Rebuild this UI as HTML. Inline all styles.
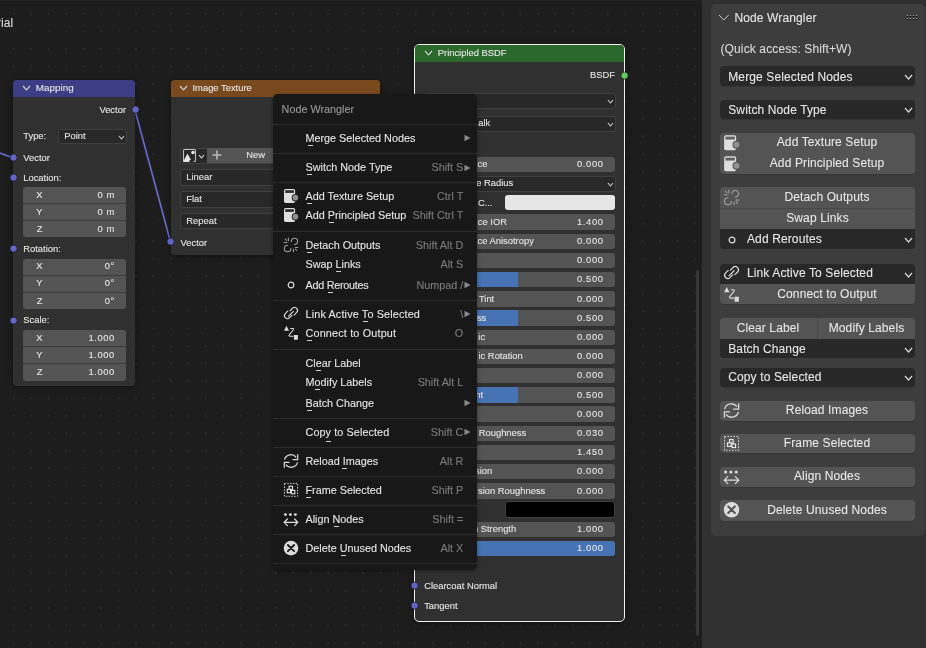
<!DOCTYPE html><html><head><meta charset="utf-8"><style>
html,body{margin:0;padding:0;width:926px;height:648px;overflow:hidden;background:#1d1d1d;}
#root{position:relative;width:926px;height:648px;overflow:hidden;will-change:transform;background:#1d1d1d;font-family:"Liberation Sans",sans-serif;}
#root div,#root svg{position:absolute;box-sizing:border-box;}
.t{white-space:nowrap;-webkit-text-stroke:0.1px currentColor;}
</style></head><body><div id="root">
<svg style="left:0;top:0" width="702" height="648">
<g fill="#292929"><rect x="12.75" y="13.00" width="2" height="2"/><rect x="12.75" y="30.47" width="2" height="2"/><rect x="12.75" y="47.94" width="2" height="2"/><rect x="12.75" y="65.41" width="2" height="2"/><rect x="12.75" y="82.88" width="2" height="2"/><rect x="12.75" y="100.35" width="2" height="2"/><rect x="12.75" y="117.82" width="2" height="2"/><rect x="12.75" y="135.29" width="2" height="2"/><rect x="12.75" y="152.76" width="2" height="2"/><rect x="12.75" y="170.23" width="2" height="2"/><rect x="12.75" y="187.70" width="2" height="2"/><rect x="12.75" y="205.17" width="2" height="2"/><rect x="12.75" y="222.64" width="2" height="2"/><rect x="12.75" y="240.11" width="2" height="2"/><rect x="12.75" y="257.58" width="2" height="2"/><rect x="12.75" y="275.05" width="2" height="2"/><rect x="12.75" y="292.52" width="2" height="2"/><rect x="12.75" y="309.99" width="2" height="2"/><rect x="12.75" y="327.46" width="2" height="2"/><rect x="12.75" y="344.93" width="2" height="2"/><rect x="12.75" y="362.40" width="2" height="2"/><rect x="12.75" y="379.87" width="2" height="2"/><rect x="12.75" y="397.34" width="2" height="2"/><rect x="12.75" y="414.81" width="2" height="2"/><rect x="12.75" y="432.28" width="2" height="2"/><rect x="12.75" y="449.75" width="2" height="2"/><rect x="12.75" y="467.22" width="2" height="2"/><rect x="12.75" y="484.69" width="2" height="2"/><rect x="12.75" y="502.16" width="2" height="2"/><rect x="12.75" y="519.63" width="2" height="2"/><rect x="12.75" y="537.10" width="2" height="2"/><rect x="12.75" y="554.57" width="2" height="2"/><rect x="12.75" y="572.04" width="2" height="2"/><rect x="12.75" y="589.51" width="2" height="2"/><rect x="12.75" y="606.98" width="2" height="2"/><rect x="12.75" y="624.45" width="2" height="2"/><rect x="12.75" y="641.92" width="2" height="2"/><rect x="30.22" y="13.00" width="2" height="2"/><rect x="30.22" y="30.47" width="2" height="2"/><rect x="30.22" y="47.94" width="2" height="2"/><rect x="30.22" y="65.41" width="2" height="2"/><rect x="30.22" y="82.88" width="2" height="2"/><rect x="30.22" y="100.35" width="2" height="2"/><rect x="30.22" y="117.82" width="2" height="2"/><rect x="30.22" y="135.29" width="2" height="2"/><rect x="30.22" y="152.76" width="2" height="2"/><rect x="30.22" y="170.23" width="2" height="2"/><rect x="30.22" y="187.70" width="2" height="2"/><rect x="30.22" y="205.17" width="2" height="2"/><rect x="30.22" y="222.64" width="2" height="2"/><rect x="30.22" y="240.11" width="2" height="2"/><rect x="30.22" y="257.58" width="2" height="2"/><rect x="30.22" y="275.05" width="2" height="2"/><rect x="30.22" y="292.52" width="2" height="2"/><rect x="30.22" y="309.99" width="2" height="2"/><rect x="30.22" y="327.46" width="2" height="2"/><rect x="30.22" y="344.93" width="2" height="2"/><rect x="30.22" y="362.40" width="2" height="2"/><rect x="30.22" y="379.87" width="2" height="2"/><rect x="30.22" y="397.34" width="2" height="2"/><rect x="30.22" y="414.81" width="2" height="2"/><rect x="30.22" y="432.28" width="2" height="2"/><rect x="30.22" y="449.75" width="2" height="2"/><rect x="30.22" y="467.22" width="2" height="2"/><rect x="30.22" y="484.69" width="2" height="2"/><rect x="30.22" y="502.16" width="2" height="2"/><rect x="30.22" y="519.63" width="2" height="2"/><rect x="30.22" y="537.10" width="2" height="2"/><rect x="30.22" y="554.57" width="2" height="2"/><rect x="30.22" y="572.04" width="2" height="2"/><rect x="30.22" y="589.51" width="2" height="2"/><rect x="30.22" y="606.98" width="2" height="2"/><rect x="30.22" y="624.45" width="2" height="2"/><rect x="30.22" y="641.92" width="2" height="2"/><rect x="47.69" y="13.00" width="2" height="2"/><rect x="47.69" y="30.47" width="2" height="2"/><rect x="47.69" y="47.94" width="2" height="2"/><rect x="47.69" y="65.41" width="2" height="2"/><rect x="47.69" y="82.88" width="2" height="2"/><rect x="47.69" y="100.35" width="2" height="2"/><rect x="47.69" y="117.82" width="2" height="2"/><rect x="47.69" y="135.29" width="2" height="2"/><rect x="47.69" y="152.76" width="2" height="2"/><rect x="47.69" y="170.23" width="2" height="2"/><rect x="47.69" y="187.70" width="2" height="2"/><rect x="47.69" y="205.17" width="2" height="2"/><rect x="47.69" y="222.64" width="2" height="2"/><rect x="47.69" y="240.11" width="2" height="2"/><rect x="47.69" y="257.58" width="2" height="2"/><rect x="47.69" y="275.05" width="2" height="2"/><rect x="47.69" y="292.52" width="2" height="2"/><rect x="47.69" y="309.99" width="2" height="2"/><rect x="47.69" y="327.46" width="2" height="2"/><rect x="47.69" y="344.93" width="2" height="2"/><rect x="47.69" y="362.40" width="2" height="2"/><rect x="47.69" y="379.87" width="2" height="2"/><rect x="47.69" y="397.34" width="2" height="2"/><rect x="47.69" y="414.81" width="2" height="2"/><rect x="47.69" y="432.28" width="2" height="2"/><rect x="47.69" y="449.75" width="2" height="2"/><rect x="47.69" y="467.22" width="2" height="2"/><rect x="47.69" y="484.69" width="2" height="2"/><rect x="47.69" y="502.16" width="2" height="2"/><rect x="47.69" y="519.63" width="2" height="2"/><rect x="47.69" y="537.10" width="2" height="2"/><rect x="47.69" y="554.57" width="2" height="2"/><rect x="47.69" y="572.04" width="2" height="2"/><rect x="47.69" y="589.51" width="2" height="2"/><rect x="47.69" y="606.98" width="2" height="2"/><rect x="47.69" y="624.45" width="2" height="2"/><rect x="47.69" y="641.92" width="2" height="2"/><rect x="65.16" y="13.00" width="2" height="2"/><rect x="65.16" y="30.47" width="2" height="2"/><rect x="65.16" y="47.94" width="2" height="2"/><rect x="65.16" y="65.41" width="2" height="2"/><rect x="65.16" y="82.88" width="2" height="2"/><rect x="65.16" y="100.35" width="2" height="2"/><rect x="65.16" y="117.82" width="2" height="2"/><rect x="65.16" y="135.29" width="2" height="2"/><rect x="65.16" y="152.76" width="2" height="2"/><rect x="65.16" y="170.23" width="2" height="2"/><rect x="65.16" y="187.70" width="2" height="2"/><rect x="65.16" y="205.17" width="2" height="2"/><rect x="65.16" y="222.64" width="2" height="2"/><rect x="65.16" y="240.11" width="2" height="2"/><rect x="65.16" y="257.58" width="2" height="2"/><rect x="65.16" y="275.05" width="2" height="2"/><rect x="65.16" y="292.52" width="2" height="2"/><rect x="65.16" y="309.99" width="2" height="2"/><rect x="65.16" y="327.46" width="2" height="2"/><rect x="65.16" y="344.93" width="2" height="2"/><rect x="65.16" y="362.40" width="2" height="2"/><rect x="65.16" y="379.87" width="2" height="2"/><rect x="65.16" y="397.34" width="2" height="2"/><rect x="65.16" y="414.81" width="2" height="2"/><rect x="65.16" y="432.28" width="2" height="2"/><rect x="65.16" y="449.75" width="2" height="2"/><rect x="65.16" y="467.22" width="2" height="2"/><rect x="65.16" y="484.69" width="2" height="2"/><rect x="65.16" y="502.16" width="2" height="2"/><rect x="65.16" y="519.63" width="2" height="2"/><rect x="65.16" y="537.10" width="2" height="2"/><rect x="65.16" y="554.57" width="2" height="2"/><rect x="65.16" y="572.04" width="2" height="2"/><rect x="65.16" y="589.51" width="2" height="2"/><rect x="65.16" y="606.98" width="2" height="2"/><rect x="65.16" y="624.45" width="2" height="2"/><rect x="65.16" y="641.92" width="2" height="2"/><rect x="82.63" y="13.00" width="2" height="2"/><rect x="82.63" y="30.47" width="2" height="2"/><rect x="82.63" y="47.94" width="2" height="2"/><rect x="82.63" y="65.41" width="2" height="2"/><rect x="82.63" y="82.88" width="2" height="2"/><rect x="82.63" y="100.35" width="2" height="2"/><rect x="82.63" y="117.82" width="2" height="2"/><rect x="82.63" y="135.29" width="2" height="2"/><rect x="82.63" y="152.76" width="2" height="2"/><rect x="82.63" y="170.23" width="2" height="2"/><rect x="82.63" y="187.70" width="2" height="2"/><rect x="82.63" y="205.17" width="2" height="2"/><rect x="82.63" y="222.64" width="2" height="2"/><rect x="82.63" y="240.11" width="2" height="2"/><rect x="82.63" y="257.58" width="2" height="2"/><rect x="82.63" y="275.05" width="2" height="2"/><rect x="82.63" y="292.52" width="2" height="2"/><rect x="82.63" y="309.99" width="2" height="2"/><rect x="82.63" y="327.46" width="2" height="2"/><rect x="82.63" y="344.93" width="2" height="2"/><rect x="82.63" y="362.40" width="2" height="2"/><rect x="82.63" y="379.87" width="2" height="2"/><rect x="82.63" y="397.34" width="2" height="2"/><rect x="82.63" y="414.81" width="2" height="2"/><rect x="82.63" y="432.28" width="2" height="2"/><rect x="82.63" y="449.75" width="2" height="2"/><rect x="82.63" y="467.22" width="2" height="2"/><rect x="82.63" y="484.69" width="2" height="2"/><rect x="82.63" y="502.16" width="2" height="2"/><rect x="82.63" y="519.63" width="2" height="2"/><rect x="82.63" y="537.10" width="2" height="2"/><rect x="82.63" y="554.57" width="2" height="2"/><rect x="82.63" y="572.04" width="2" height="2"/><rect x="82.63" y="589.51" width="2" height="2"/><rect x="82.63" y="606.98" width="2" height="2"/><rect x="82.63" y="624.45" width="2" height="2"/><rect x="82.63" y="641.92" width="2" height="2"/><rect x="100.10" y="13.00" width="2" height="2"/><rect x="100.10" y="30.47" width="2" height="2"/><rect x="100.10" y="47.94" width="2" height="2"/><rect x="100.10" y="65.41" width="2" height="2"/><rect x="100.10" y="82.88" width="2" height="2"/><rect x="100.10" y="100.35" width="2" height="2"/><rect x="100.10" y="117.82" width="2" height="2"/><rect x="100.10" y="135.29" width="2" height="2"/><rect x="100.10" y="152.76" width="2" height="2"/><rect x="100.10" y="170.23" width="2" height="2"/><rect x="100.10" y="187.70" width="2" height="2"/><rect x="100.10" y="205.17" width="2" height="2"/><rect x="100.10" y="222.64" width="2" height="2"/><rect x="100.10" y="240.11" width="2" height="2"/><rect x="100.10" y="257.58" width="2" height="2"/><rect x="100.10" y="275.05" width="2" height="2"/><rect x="100.10" y="292.52" width="2" height="2"/><rect x="100.10" y="309.99" width="2" height="2"/><rect x="100.10" y="327.46" width="2" height="2"/><rect x="100.10" y="344.93" width="2" height="2"/><rect x="100.10" y="362.40" width="2" height="2"/><rect x="100.10" y="379.87" width="2" height="2"/><rect x="100.10" y="397.34" width="2" height="2"/><rect x="100.10" y="414.81" width="2" height="2"/><rect x="100.10" y="432.28" width="2" height="2"/><rect x="100.10" y="449.75" width="2" height="2"/><rect x="100.10" y="467.22" width="2" height="2"/><rect x="100.10" y="484.69" width="2" height="2"/><rect x="100.10" y="502.16" width="2" height="2"/><rect x="100.10" y="519.63" width="2" height="2"/><rect x="100.10" y="537.10" width="2" height="2"/><rect x="100.10" y="554.57" width="2" height="2"/><rect x="100.10" y="572.04" width="2" height="2"/><rect x="100.10" y="589.51" width="2" height="2"/><rect x="100.10" y="606.98" width="2" height="2"/><rect x="100.10" y="624.45" width="2" height="2"/><rect x="100.10" y="641.92" width="2" height="2"/><rect x="117.57" y="13.00" width="2" height="2"/><rect x="117.57" y="30.47" width="2" height="2"/><rect x="117.57" y="47.94" width="2" height="2"/><rect x="117.57" y="65.41" width="2" height="2"/><rect x="117.57" y="82.88" width="2" height="2"/><rect x="117.57" y="100.35" width="2" height="2"/><rect x="117.57" y="117.82" width="2" height="2"/><rect x="117.57" y="135.29" width="2" height="2"/><rect x="117.57" y="152.76" width="2" height="2"/><rect x="117.57" y="170.23" width="2" height="2"/><rect x="117.57" y="187.70" width="2" height="2"/><rect x="117.57" y="205.17" width="2" height="2"/><rect x="117.57" y="222.64" width="2" height="2"/><rect x="117.57" y="240.11" width="2" height="2"/><rect x="117.57" y="257.58" width="2" height="2"/><rect x="117.57" y="275.05" width="2" height="2"/><rect x="117.57" y="292.52" width="2" height="2"/><rect x="117.57" y="309.99" width="2" height="2"/><rect x="117.57" y="327.46" width="2" height="2"/><rect x="117.57" y="344.93" width="2" height="2"/><rect x="117.57" y="362.40" width="2" height="2"/><rect x="117.57" y="379.87" width="2" height="2"/><rect x="117.57" y="397.34" width="2" height="2"/><rect x="117.57" y="414.81" width="2" height="2"/><rect x="117.57" y="432.28" width="2" height="2"/><rect x="117.57" y="449.75" width="2" height="2"/><rect x="117.57" y="467.22" width="2" height="2"/><rect x="117.57" y="484.69" width="2" height="2"/><rect x="117.57" y="502.16" width="2" height="2"/><rect x="117.57" y="519.63" width="2" height="2"/><rect x="117.57" y="537.10" width="2" height="2"/><rect x="117.57" y="554.57" width="2" height="2"/><rect x="117.57" y="572.04" width="2" height="2"/><rect x="117.57" y="589.51" width="2" height="2"/><rect x="117.57" y="606.98" width="2" height="2"/><rect x="117.57" y="624.45" width="2" height="2"/><rect x="117.57" y="641.92" width="2" height="2"/><rect x="135.04" y="13.00" width="2" height="2"/><rect x="135.04" y="30.47" width="2" height="2"/><rect x="135.04" y="47.94" width="2" height="2"/><rect x="135.04" y="65.41" width="2" height="2"/><rect x="135.04" y="82.88" width="2" height="2"/><rect x="135.04" y="100.35" width="2" height="2"/><rect x="135.04" y="117.82" width="2" height="2"/><rect x="135.04" y="135.29" width="2" height="2"/><rect x="135.04" y="152.76" width="2" height="2"/><rect x="135.04" y="170.23" width="2" height="2"/><rect x="135.04" y="187.70" width="2" height="2"/><rect x="135.04" y="205.17" width="2" height="2"/><rect x="135.04" y="222.64" width="2" height="2"/><rect x="135.04" y="240.11" width="2" height="2"/><rect x="135.04" y="257.58" width="2" height="2"/><rect x="135.04" y="275.05" width="2" height="2"/><rect x="135.04" y="292.52" width="2" height="2"/><rect x="135.04" y="309.99" width="2" height="2"/><rect x="135.04" y="327.46" width="2" height="2"/><rect x="135.04" y="344.93" width="2" height="2"/><rect x="135.04" y="362.40" width="2" height="2"/><rect x="135.04" y="379.87" width="2" height="2"/><rect x="135.04" y="397.34" width="2" height="2"/><rect x="135.04" y="414.81" width="2" height="2"/><rect x="135.04" y="432.28" width="2" height="2"/><rect x="135.04" y="449.75" width="2" height="2"/><rect x="135.04" y="467.22" width="2" height="2"/><rect x="135.04" y="484.69" width="2" height="2"/><rect x="135.04" y="502.16" width="2" height="2"/><rect x="135.04" y="519.63" width="2" height="2"/><rect x="135.04" y="537.10" width="2" height="2"/><rect x="135.04" y="554.57" width="2" height="2"/><rect x="135.04" y="572.04" width="2" height="2"/><rect x="135.04" y="589.51" width="2" height="2"/><rect x="135.04" y="606.98" width="2" height="2"/><rect x="135.04" y="624.45" width="2" height="2"/><rect x="135.04" y="641.92" width="2" height="2"/><rect x="152.51" y="13.00" width="2" height="2"/><rect x="152.51" y="30.47" width="2" height="2"/><rect x="152.51" y="47.94" width="2" height="2"/><rect x="152.51" y="65.41" width="2" height="2"/><rect x="152.51" y="82.88" width="2" height="2"/><rect x="152.51" y="100.35" width="2" height="2"/><rect x="152.51" y="117.82" width="2" height="2"/><rect x="152.51" y="135.29" width="2" height="2"/><rect x="152.51" y="152.76" width="2" height="2"/><rect x="152.51" y="170.23" width="2" height="2"/><rect x="152.51" y="187.70" width="2" height="2"/><rect x="152.51" y="205.17" width="2" height="2"/><rect x="152.51" y="222.64" width="2" height="2"/><rect x="152.51" y="240.11" width="2" height="2"/><rect x="152.51" y="257.58" width="2" height="2"/><rect x="152.51" y="275.05" width="2" height="2"/><rect x="152.51" y="292.52" width="2" height="2"/><rect x="152.51" y="309.99" width="2" height="2"/><rect x="152.51" y="327.46" width="2" height="2"/><rect x="152.51" y="344.93" width="2" height="2"/><rect x="152.51" y="362.40" width="2" height="2"/><rect x="152.51" y="379.87" width="2" height="2"/><rect x="152.51" y="397.34" width="2" height="2"/><rect x="152.51" y="414.81" width="2" height="2"/><rect x="152.51" y="432.28" width="2" height="2"/><rect x="152.51" y="449.75" width="2" height="2"/><rect x="152.51" y="467.22" width="2" height="2"/><rect x="152.51" y="484.69" width="2" height="2"/><rect x="152.51" y="502.16" width="2" height="2"/><rect x="152.51" y="519.63" width="2" height="2"/><rect x="152.51" y="537.10" width="2" height="2"/><rect x="152.51" y="554.57" width="2" height="2"/><rect x="152.51" y="572.04" width="2" height="2"/><rect x="152.51" y="589.51" width="2" height="2"/><rect x="152.51" y="606.98" width="2" height="2"/><rect x="152.51" y="624.45" width="2" height="2"/><rect x="152.51" y="641.92" width="2" height="2"/><rect x="169.98" y="13.00" width="2" height="2"/><rect x="169.98" y="30.47" width="2" height="2"/><rect x="169.98" y="47.94" width="2" height="2"/><rect x="169.98" y="65.41" width="2" height="2"/><rect x="169.98" y="82.88" width="2" height="2"/><rect x="169.98" y="100.35" width="2" height="2"/><rect x="169.98" y="117.82" width="2" height="2"/><rect x="169.98" y="135.29" width="2" height="2"/><rect x="169.98" y="152.76" width="2" height="2"/><rect x="169.98" y="170.23" width="2" height="2"/><rect x="169.98" y="187.70" width="2" height="2"/><rect x="169.98" y="205.17" width="2" height="2"/><rect x="169.98" y="222.64" width="2" height="2"/><rect x="169.98" y="240.11" width="2" height="2"/><rect x="169.98" y="257.58" width="2" height="2"/><rect x="169.98" y="275.05" width="2" height="2"/><rect x="169.98" y="292.52" width="2" height="2"/><rect x="169.98" y="309.99" width="2" height="2"/><rect x="169.98" y="327.46" width="2" height="2"/><rect x="169.98" y="344.93" width="2" height="2"/><rect x="169.98" y="362.40" width="2" height="2"/><rect x="169.98" y="379.87" width="2" height="2"/><rect x="169.98" y="397.34" width="2" height="2"/><rect x="169.98" y="414.81" width="2" height="2"/><rect x="169.98" y="432.28" width="2" height="2"/><rect x="169.98" y="449.75" width="2" height="2"/><rect x="169.98" y="467.22" width="2" height="2"/><rect x="169.98" y="484.69" width="2" height="2"/><rect x="169.98" y="502.16" width="2" height="2"/><rect x="169.98" y="519.63" width="2" height="2"/><rect x="169.98" y="537.10" width="2" height="2"/><rect x="169.98" y="554.57" width="2" height="2"/><rect x="169.98" y="572.04" width="2" height="2"/><rect x="169.98" y="589.51" width="2" height="2"/><rect x="169.98" y="606.98" width="2" height="2"/><rect x="169.98" y="624.45" width="2" height="2"/><rect x="169.98" y="641.92" width="2" height="2"/><rect x="187.45" y="13.00" width="2" height="2"/><rect x="187.45" y="30.47" width="2" height="2"/><rect x="187.45" y="47.94" width="2" height="2"/><rect x="187.45" y="65.41" width="2" height="2"/><rect x="187.45" y="82.88" width="2" height="2"/><rect x="187.45" y="100.35" width="2" height="2"/><rect x="187.45" y="117.82" width="2" height="2"/><rect x="187.45" y="135.29" width="2" height="2"/><rect x="187.45" y="152.76" width="2" height="2"/><rect x="187.45" y="170.23" width="2" height="2"/><rect x="187.45" y="187.70" width="2" height="2"/><rect x="187.45" y="205.17" width="2" height="2"/><rect x="187.45" y="222.64" width="2" height="2"/><rect x="187.45" y="240.11" width="2" height="2"/><rect x="187.45" y="257.58" width="2" height="2"/><rect x="187.45" y="275.05" width="2" height="2"/><rect x="187.45" y="292.52" width="2" height="2"/><rect x="187.45" y="309.99" width="2" height="2"/><rect x="187.45" y="327.46" width="2" height="2"/><rect x="187.45" y="344.93" width="2" height="2"/><rect x="187.45" y="362.40" width="2" height="2"/><rect x="187.45" y="379.87" width="2" height="2"/><rect x="187.45" y="397.34" width="2" height="2"/><rect x="187.45" y="414.81" width="2" height="2"/><rect x="187.45" y="432.28" width="2" height="2"/><rect x="187.45" y="449.75" width="2" height="2"/><rect x="187.45" y="467.22" width="2" height="2"/><rect x="187.45" y="484.69" width="2" height="2"/><rect x="187.45" y="502.16" width="2" height="2"/><rect x="187.45" y="519.63" width="2" height="2"/><rect x="187.45" y="537.10" width="2" height="2"/><rect x="187.45" y="554.57" width="2" height="2"/><rect x="187.45" y="572.04" width="2" height="2"/><rect x="187.45" y="589.51" width="2" height="2"/><rect x="187.45" y="606.98" width="2" height="2"/><rect x="187.45" y="624.45" width="2" height="2"/><rect x="187.45" y="641.92" width="2" height="2"/><rect x="204.92" y="13.00" width="2" height="2"/><rect x="204.92" y="30.47" width="2" height="2"/><rect x="204.92" y="47.94" width="2" height="2"/><rect x="204.92" y="65.41" width="2" height="2"/><rect x="204.92" y="82.88" width="2" height="2"/><rect x="204.92" y="100.35" width="2" height="2"/><rect x="204.92" y="117.82" width="2" height="2"/><rect x="204.92" y="135.29" width="2" height="2"/><rect x="204.92" y="152.76" width="2" height="2"/><rect x="204.92" y="170.23" width="2" height="2"/><rect x="204.92" y="187.70" width="2" height="2"/><rect x="204.92" y="205.17" width="2" height="2"/><rect x="204.92" y="222.64" width="2" height="2"/><rect x="204.92" y="240.11" width="2" height="2"/><rect x="204.92" y="257.58" width="2" height="2"/><rect x="204.92" y="275.05" width="2" height="2"/><rect x="204.92" y="292.52" width="2" height="2"/><rect x="204.92" y="309.99" width="2" height="2"/><rect x="204.92" y="327.46" width="2" height="2"/><rect x="204.92" y="344.93" width="2" height="2"/><rect x="204.92" y="362.40" width="2" height="2"/><rect x="204.92" y="379.87" width="2" height="2"/><rect x="204.92" y="397.34" width="2" height="2"/><rect x="204.92" y="414.81" width="2" height="2"/><rect x="204.92" y="432.28" width="2" height="2"/><rect x="204.92" y="449.75" width="2" height="2"/><rect x="204.92" y="467.22" width="2" height="2"/><rect x="204.92" y="484.69" width="2" height="2"/><rect x="204.92" y="502.16" width="2" height="2"/><rect x="204.92" y="519.63" width="2" height="2"/><rect x="204.92" y="537.10" width="2" height="2"/><rect x="204.92" y="554.57" width="2" height="2"/><rect x="204.92" y="572.04" width="2" height="2"/><rect x="204.92" y="589.51" width="2" height="2"/><rect x="204.92" y="606.98" width="2" height="2"/><rect x="204.92" y="624.45" width="2" height="2"/><rect x="204.92" y="641.92" width="2" height="2"/><rect x="222.39" y="13.00" width="2" height="2"/><rect x="222.39" y="30.47" width="2" height="2"/><rect x="222.39" y="47.94" width="2" height="2"/><rect x="222.39" y="65.41" width="2" height="2"/><rect x="222.39" y="82.88" width="2" height="2"/><rect x="222.39" y="100.35" width="2" height="2"/><rect x="222.39" y="117.82" width="2" height="2"/><rect x="222.39" y="135.29" width="2" height="2"/><rect x="222.39" y="152.76" width="2" height="2"/><rect x="222.39" y="170.23" width="2" height="2"/><rect x="222.39" y="187.70" width="2" height="2"/><rect x="222.39" y="205.17" width="2" height="2"/><rect x="222.39" y="222.64" width="2" height="2"/><rect x="222.39" y="240.11" width="2" height="2"/><rect x="222.39" y="257.58" width="2" height="2"/><rect x="222.39" y="275.05" width="2" height="2"/><rect x="222.39" y="292.52" width="2" height="2"/><rect x="222.39" y="309.99" width="2" height="2"/><rect x="222.39" y="327.46" width="2" height="2"/><rect x="222.39" y="344.93" width="2" height="2"/><rect x="222.39" y="362.40" width="2" height="2"/><rect x="222.39" y="379.87" width="2" height="2"/><rect x="222.39" y="397.34" width="2" height="2"/><rect x="222.39" y="414.81" width="2" height="2"/><rect x="222.39" y="432.28" width="2" height="2"/><rect x="222.39" y="449.75" width="2" height="2"/><rect x="222.39" y="467.22" width="2" height="2"/><rect x="222.39" y="484.69" width="2" height="2"/><rect x="222.39" y="502.16" width="2" height="2"/><rect x="222.39" y="519.63" width="2" height="2"/><rect x="222.39" y="537.10" width="2" height="2"/><rect x="222.39" y="554.57" width="2" height="2"/><rect x="222.39" y="572.04" width="2" height="2"/><rect x="222.39" y="589.51" width="2" height="2"/><rect x="222.39" y="606.98" width="2" height="2"/><rect x="222.39" y="624.45" width="2" height="2"/><rect x="222.39" y="641.92" width="2" height="2"/><rect x="239.86" y="13.00" width="2" height="2"/><rect x="239.86" y="30.47" width="2" height="2"/><rect x="239.86" y="47.94" width="2" height="2"/><rect x="239.86" y="65.41" width="2" height="2"/><rect x="239.86" y="82.88" width="2" height="2"/><rect x="239.86" y="100.35" width="2" height="2"/><rect x="239.86" y="117.82" width="2" height="2"/><rect x="239.86" y="135.29" width="2" height="2"/><rect x="239.86" y="152.76" width="2" height="2"/><rect x="239.86" y="170.23" width="2" height="2"/><rect x="239.86" y="187.70" width="2" height="2"/><rect x="239.86" y="205.17" width="2" height="2"/><rect x="239.86" y="222.64" width="2" height="2"/><rect x="239.86" y="240.11" width="2" height="2"/><rect x="239.86" y="257.58" width="2" height="2"/><rect x="239.86" y="275.05" width="2" height="2"/><rect x="239.86" y="292.52" width="2" height="2"/><rect x="239.86" y="309.99" width="2" height="2"/><rect x="239.86" y="327.46" width="2" height="2"/><rect x="239.86" y="344.93" width="2" height="2"/><rect x="239.86" y="362.40" width="2" height="2"/><rect x="239.86" y="379.87" width="2" height="2"/><rect x="239.86" y="397.34" width="2" height="2"/><rect x="239.86" y="414.81" width="2" height="2"/><rect x="239.86" y="432.28" width="2" height="2"/><rect x="239.86" y="449.75" width="2" height="2"/><rect x="239.86" y="467.22" width="2" height="2"/><rect x="239.86" y="484.69" width="2" height="2"/><rect x="239.86" y="502.16" width="2" height="2"/><rect x="239.86" y="519.63" width="2" height="2"/><rect x="239.86" y="537.10" width="2" height="2"/><rect x="239.86" y="554.57" width="2" height="2"/><rect x="239.86" y="572.04" width="2" height="2"/><rect x="239.86" y="589.51" width="2" height="2"/><rect x="239.86" y="606.98" width="2" height="2"/><rect x="239.86" y="624.45" width="2" height="2"/><rect x="239.86" y="641.92" width="2" height="2"/><rect x="257.33" y="13.00" width="2" height="2"/><rect x="257.33" y="30.47" width="2" height="2"/><rect x="257.33" y="47.94" width="2" height="2"/><rect x="257.33" y="65.41" width="2" height="2"/><rect x="257.33" y="82.88" width="2" height="2"/><rect x="257.33" y="100.35" width="2" height="2"/><rect x="257.33" y="117.82" width="2" height="2"/><rect x="257.33" y="135.29" width="2" height="2"/><rect x="257.33" y="152.76" width="2" height="2"/><rect x="257.33" y="170.23" width="2" height="2"/><rect x="257.33" y="187.70" width="2" height="2"/><rect x="257.33" y="205.17" width="2" height="2"/><rect x="257.33" y="222.64" width="2" height="2"/><rect x="257.33" y="240.11" width="2" height="2"/><rect x="257.33" y="257.58" width="2" height="2"/><rect x="257.33" y="275.05" width="2" height="2"/><rect x="257.33" y="292.52" width="2" height="2"/><rect x="257.33" y="309.99" width="2" height="2"/><rect x="257.33" y="327.46" width="2" height="2"/><rect x="257.33" y="344.93" width="2" height="2"/><rect x="257.33" y="362.40" width="2" height="2"/><rect x="257.33" y="379.87" width="2" height="2"/><rect x="257.33" y="397.34" width="2" height="2"/><rect x="257.33" y="414.81" width="2" height="2"/><rect x="257.33" y="432.28" width="2" height="2"/><rect x="257.33" y="449.75" width="2" height="2"/><rect x="257.33" y="467.22" width="2" height="2"/><rect x="257.33" y="484.69" width="2" height="2"/><rect x="257.33" y="502.16" width="2" height="2"/><rect x="257.33" y="519.63" width="2" height="2"/><rect x="257.33" y="537.10" width="2" height="2"/><rect x="257.33" y="554.57" width="2" height="2"/><rect x="257.33" y="572.04" width="2" height="2"/><rect x="257.33" y="589.51" width="2" height="2"/><rect x="257.33" y="606.98" width="2" height="2"/><rect x="257.33" y="624.45" width="2" height="2"/><rect x="257.33" y="641.92" width="2" height="2"/><rect x="274.80" y="13.00" width="2" height="2"/><rect x="274.80" y="30.47" width="2" height="2"/><rect x="274.80" y="47.94" width="2" height="2"/><rect x="274.80" y="65.41" width="2" height="2"/><rect x="274.80" y="82.88" width="2" height="2"/><rect x="274.80" y="100.35" width="2" height="2"/><rect x="274.80" y="117.82" width="2" height="2"/><rect x="274.80" y="135.29" width="2" height="2"/><rect x="274.80" y="152.76" width="2" height="2"/><rect x="274.80" y="170.23" width="2" height="2"/><rect x="274.80" y="187.70" width="2" height="2"/><rect x="274.80" y="205.17" width="2" height="2"/><rect x="274.80" y="222.64" width="2" height="2"/><rect x="274.80" y="240.11" width="2" height="2"/><rect x="274.80" y="257.58" width="2" height="2"/><rect x="274.80" y="275.05" width="2" height="2"/><rect x="274.80" y="292.52" width="2" height="2"/><rect x="274.80" y="309.99" width="2" height="2"/><rect x="274.80" y="327.46" width="2" height="2"/><rect x="274.80" y="344.93" width="2" height="2"/><rect x="274.80" y="362.40" width="2" height="2"/><rect x="274.80" y="379.87" width="2" height="2"/><rect x="274.80" y="397.34" width="2" height="2"/><rect x="274.80" y="414.81" width="2" height="2"/><rect x="274.80" y="432.28" width="2" height="2"/><rect x="274.80" y="449.75" width="2" height="2"/><rect x="274.80" y="467.22" width="2" height="2"/><rect x="274.80" y="484.69" width="2" height="2"/><rect x="274.80" y="502.16" width="2" height="2"/><rect x="274.80" y="519.63" width="2" height="2"/><rect x="274.80" y="537.10" width="2" height="2"/><rect x="274.80" y="554.57" width="2" height="2"/><rect x="274.80" y="572.04" width="2" height="2"/><rect x="274.80" y="589.51" width="2" height="2"/><rect x="274.80" y="606.98" width="2" height="2"/><rect x="274.80" y="624.45" width="2" height="2"/><rect x="274.80" y="641.92" width="2" height="2"/><rect x="292.27" y="13.00" width="2" height="2"/><rect x="292.27" y="30.47" width="2" height="2"/><rect x="292.27" y="47.94" width="2" height="2"/><rect x="292.27" y="65.41" width="2" height="2"/><rect x="292.27" y="82.88" width="2" height="2"/><rect x="292.27" y="100.35" width="2" height="2"/><rect x="292.27" y="117.82" width="2" height="2"/><rect x="292.27" y="135.29" width="2" height="2"/><rect x="292.27" y="152.76" width="2" height="2"/><rect x="292.27" y="170.23" width="2" height="2"/><rect x="292.27" y="187.70" width="2" height="2"/><rect x="292.27" y="205.17" width="2" height="2"/><rect x="292.27" y="222.64" width="2" height="2"/><rect x="292.27" y="240.11" width="2" height="2"/><rect x="292.27" y="257.58" width="2" height="2"/><rect x="292.27" y="275.05" width="2" height="2"/><rect x="292.27" y="292.52" width="2" height="2"/><rect x="292.27" y="309.99" width="2" height="2"/><rect x="292.27" y="327.46" width="2" height="2"/><rect x="292.27" y="344.93" width="2" height="2"/><rect x="292.27" y="362.40" width="2" height="2"/><rect x="292.27" y="379.87" width="2" height="2"/><rect x="292.27" y="397.34" width="2" height="2"/><rect x="292.27" y="414.81" width="2" height="2"/><rect x="292.27" y="432.28" width="2" height="2"/><rect x="292.27" y="449.75" width="2" height="2"/><rect x="292.27" y="467.22" width="2" height="2"/><rect x="292.27" y="484.69" width="2" height="2"/><rect x="292.27" y="502.16" width="2" height="2"/><rect x="292.27" y="519.63" width="2" height="2"/><rect x="292.27" y="537.10" width="2" height="2"/><rect x="292.27" y="554.57" width="2" height="2"/><rect x="292.27" y="572.04" width="2" height="2"/><rect x="292.27" y="589.51" width="2" height="2"/><rect x="292.27" y="606.98" width="2" height="2"/><rect x="292.27" y="624.45" width="2" height="2"/><rect x="292.27" y="641.92" width="2" height="2"/><rect x="309.74" y="13.00" width="2" height="2"/><rect x="309.74" y="30.47" width="2" height="2"/><rect x="309.74" y="47.94" width="2" height="2"/><rect x="309.74" y="65.41" width="2" height="2"/><rect x="309.74" y="82.88" width="2" height="2"/><rect x="309.74" y="100.35" width="2" height="2"/><rect x="309.74" y="117.82" width="2" height="2"/><rect x="309.74" y="135.29" width="2" height="2"/><rect x="309.74" y="152.76" width="2" height="2"/><rect x="309.74" y="170.23" width="2" height="2"/><rect x="309.74" y="187.70" width="2" height="2"/><rect x="309.74" y="205.17" width="2" height="2"/><rect x="309.74" y="222.64" width="2" height="2"/><rect x="309.74" y="240.11" width="2" height="2"/><rect x="309.74" y="257.58" width="2" height="2"/><rect x="309.74" y="275.05" width="2" height="2"/><rect x="309.74" y="292.52" width="2" height="2"/><rect x="309.74" y="309.99" width="2" height="2"/><rect x="309.74" y="327.46" width="2" height="2"/><rect x="309.74" y="344.93" width="2" height="2"/><rect x="309.74" y="362.40" width="2" height="2"/><rect x="309.74" y="379.87" width="2" height="2"/><rect x="309.74" y="397.34" width="2" height="2"/><rect x="309.74" y="414.81" width="2" height="2"/><rect x="309.74" y="432.28" width="2" height="2"/><rect x="309.74" y="449.75" width="2" height="2"/><rect x="309.74" y="467.22" width="2" height="2"/><rect x="309.74" y="484.69" width="2" height="2"/><rect x="309.74" y="502.16" width="2" height="2"/><rect x="309.74" y="519.63" width="2" height="2"/><rect x="309.74" y="537.10" width="2" height="2"/><rect x="309.74" y="554.57" width="2" height="2"/><rect x="309.74" y="572.04" width="2" height="2"/><rect x="309.74" y="589.51" width="2" height="2"/><rect x="309.74" y="606.98" width="2" height="2"/><rect x="309.74" y="624.45" width="2" height="2"/><rect x="309.74" y="641.92" width="2" height="2"/><rect x="327.21" y="13.00" width="2" height="2"/><rect x="327.21" y="30.47" width="2" height="2"/><rect x="327.21" y="47.94" width="2" height="2"/><rect x="327.21" y="65.41" width="2" height="2"/><rect x="327.21" y="82.88" width="2" height="2"/><rect x="327.21" y="100.35" width="2" height="2"/><rect x="327.21" y="117.82" width="2" height="2"/><rect x="327.21" y="135.29" width="2" height="2"/><rect x="327.21" y="152.76" width="2" height="2"/><rect x="327.21" y="170.23" width="2" height="2"/><rect x="327.21" y="187.70" width="2" height="2"/><rect x="327.21" y="205.17" width="2" height="2"/><rect x="327.21" y="222.64" width="2" height="2"/><rect x="327.21" y="240.11" width="2" height="2"/><rect x="327.21" y="257.58" width="2" height="2"/><rect x="327.21" y="275.05" width="2" height="2"/><rect x="327.21" y="292.52" width="2" height="2"/><rect x="327.21" y="309.99" width="2" height="2"/><rect x="327.21" y="327.46" width="2" height="2"/><rect x="327.21" y="344.93" width="2" height="2"/><rect x="327.21" y="362.40" width="2" height="2"/><rect x="327.21" y="379.87" width="2" height="2"/><rect x="327.21" y="397.34" width="2" height="2"/><rect x="327.21" y="414.81" width="2" height="2"/><rect x="327.21" y="432.28" width="2" height="2"/><rect x="327.21" y="449.75" width="2" height="2"/><rect x="327.21" y="467.22" width="2" height="2"/><rect x="327.21" y="484.69" width="2" height="2"/><rect x="327.21" y="502.16" width="2" height="2"/><rect x="327.21" y="519.63" width="2" height="2"/><rect x="327.21" y="537.10" width="2" height="2"/><rect x="327.21" y="554.57" width="2" height="2"/><rect x="327.21" y="572.04" width="2" height="2"/><rect x="327.21" y="589.51" width="2" height="2"/><rect x="327.21" y="606.98" width="2" height="2"/><rect x="327.21" y="624.45" width="2" height="2"/><rect x="327.21" y="641.92" width="2" height="2"/><rect x="344.68" y="13.00" width="2" height="2"/><rect x="344.68" y="30.47" width="2" height="2"/><rect x="344.68" y="47.94" width="2" height="2"/><rect x="344.68" y="65.41" width="2" height="2"/><rect x="344.68" y="82.88" width="2" height="2"/><rect x="344.68" y="100.35" width="2" height="2"/><rect x="344.68" y="117.82" width="2" height="2"/><rect x="344.68" y="135.29" width="2" height="2"/><rect x="344.68" y="152.76" width="2" height="2"/><rect x="344.68" y="170.23" width="2" height="2"/><rect x="344.68" y="187.70" width="2" height="2"/><rect x="344.68" y="205.17" width="2" height="2"/><rect x="344.68" y="222.64" width="2" height="2"/><rect x="344.68" y="240.11" width="2" height="2"/><rect x="344.68" y="257.58" width="2" height="2"/><rect x="344.68" y="275.05" width="2" height="2"/><rect x="344.68" y="292.52" width="2" height="2"/><rect x="344.68" y="309.99" width="2" height="2"/><rect x="344.68" y="327.46" width="2" height="2"/><rect x="344.68" y="344.93" width="2" height="2"/><rect x="344.68" y="362.40" width="2" height="2"/><rect x="344.68" y="379.87" width="2" height="2"/><rect x="344.68" y="397.34" width="2" height="2"/><rect x="344.68" y="414.81" width="2" height="2"/><rect x="344.68" y="432.28" width="2" height="2"/><rect x="344.68" y="449.75" width="2" height="2"/><rect x="344.68" y="467.22" width="2" height="2"/><rect x="344.68" y="484.69" width="2" height="2"/><rect x="344.68" y="502.16" width="2" height="2"/><rect x="344.68" y="519.63" width="2" height="2"/><rect x="344.68" y="537.10" width="2" height="2"/><rect x="344.68" y="554.57" width="2" height="2"/><rect x="344.68" y="572.04" width="2" height="2"/><rect x="344.68" y="589.51" width="2" height="2"/><rect x="344.68" y="606.98" width="2" height="2"/><rect x="344.68" y="624.45" width="2" height="2"/><rect x="344.68" y="641.92" width="2" height="2"/><rect x="362.15" y="13.00" width="2" height="2"/><rect x="362.15" y="30.47" width="2" height="2"/><rect x="362.15" y="47.94" width="2" height="2"/><rect x="362.15" y="65.41" width="2" height="2"/><rect x="362.15" y="82.88" width="2" height="2"/><rect x="362.15" y="100.35" width="2" height="2"/><rect x="362.15" y="117.82" width="2" height="2"/><rect x="362.15" y="135.29" width="2" height="2"/><rect x="362.15" y="152.76" width="2" height="2"/><rect x="362.15" y="170.23" width="2" height="2"/><rect x="362.15" y="187.70" width="2" height="2"/><rect x="362.15" y="205.17" width="2" height="2"/><rect x="362.15" y="222.64" width="2" height="2"/><rect x="362.15" y="240.11" width="2" height="2"/><rect x="362.15" y="257.58" width="2" height="2"/><rect x="362.15" y="275.05" width="2" height="2"/><rect x="362.15" y="292.52" width="2" height="2"/><rect x="362.15" y="309.99" width="2" height="2"/><rect x="362.15" y="327.46" width="2" height="2"/><rect x="362.15" y="344.93" width="2" height="2"/><rect x="362.15" y="362.40" width="2" height="2"/><rect x="362.15" y="379.87" width="2" height="2"/><rect x="362.15" y="397.34" width="2" height="2"/><rect x="362.15" y="414.81" width="2" height="2"/><rect x="362.15" y="432.28" width="2" height="2"/><rect x="362.15" y="449.75" width="2" height="2"/><rect x="362.15" y="467.22" width="2" height="2"/><rect x="362.15" y="484.69" width="2" height="2"/><rect x="362.15" y="502.16" width="2" height="2"/><rect x="362.15" y="519.63" width="2" height="2"/><rect x="362.15" y="537.10" width="2" height="2"/><rect x="362.15" y="554.57" width="2" height="2"/><rect x="362.15" y="572.04" width="2" height="2"/><rect x="362.15" y="589.51" width="2" height="2"/><rect x="362.15" y="606.98" width="2" height="2"/><rect x="362.15" y="624.45" width="2" height="2"/><rect x="362.15" y="641.92" width="2" height="2"/><rect x="379.62" y="13.00" width="2" height="2"/><rect x="379.62" y="30.47" width="2" height="2"/><rect x="379.62" y="47.94" width="2" height="2"/><rect x="379.62" y="65.41" width="2" height="2"/><rect x="379.62" y="82.88" width="2" height="2"/><rect x="379.62" y="100.35" width="2" height="2"/><rect x="379.62" y="117.82" width="2" height="2"/><rect x="379.62" y="135.29" width="2" height="2"/><rect x="379.62" y="152.76" width="2" height="2"/><rect x="379.62" y="170.23" width="2" height="2"/><rect x="379.62" y="187.70" width="2" height="2"/><rect x="379.62" y="205.17" width="2" height="2"/><rect x="379.62" y="222.64" width="2" height="2"/><rect x="379.62" y="240.11" width="2" height="2"/><rect x="379.62" y="257.58" width="2" height="2"/><rect x="379.62" y="275.05" width="2" height="2"/><rect x="379.62" y="292.52" width="2" height="2"/><rect x="379.62" y="309.99" width="2" height="2"/><rect x="379.62" y="327.46" width="2" height="2"/><rect x="379.62" y="344.93" width="2" height="2"/><rect x="379.62" y="362.40" width="2" height="2"/><rect x="379.62" y="379.87" width="2" height="2"/><rect x="379.62" y="397.34" width="2" height="2"/><rect x="379.62" y="414.81" width="2" height="2"/><rect x="379.62" y="432.28" width="2" height="2"/><rect x="379.62" y="449.75" width="2" height="2"/><rect x="379.62" y="467.22" width="2" height="2"/><rect x="379.62" y="484.69" width="2" height="2"/><rect x="379.62" y="502.16" width="2" height="2"/><rect x="379.62" y="519.63" width="2" height="2"/><rect x="379.62" y="537.10" width="2" height="2"/><rect x="379.62" y="554.57" width="2" height="2"/><rect x="379.62" y="572.04" width="2" height="2"/><rect x="379.62" y="589.51" width="2" height="2"/><rect x="379.62" y="606.98" width="2" height="2"/><rect x="379.62" y="624.45" width="2" height="2"/><rect x="379.62" y="641.92" width="2" height="2"/><rect x="397.09" y="13.00" width="2" height="2"/><rect x="397.09" y="30.47" width="2" height="2"/><rect x="397.09" y="47.94" width="2" height="2"/><rect x="397.09" y="65.41" width="2" height="2"/><rect x="397.09" y="82.88" width="2" height="2"/><rect x="397.09" y="100.35" width="2" height="2"/><rect x="397.09" y="117.82" width="2" height="2"/><rect x="397.09" y="135.29" width="2" height="2"/><rect x="397.09" y="152.76" width="2" height="2"/><rect x="397.09" y="170.23" width="2" height="2"/><rect x="397.09" y="187.70" width="2" height="2"/><rect x="397.09" y="205.17" width="2" height="2"/><rect x="397.09" y="222.64" width="2" height="2"/><rect x="397.09" y="240.11" width="2" height="2"/><rect x="397.09" y="257.58" width="2" height="2"/><rect x="397.09" y="275.05" width="2" height="2"/><rect x="397.09" y="292.52" width="2" height="2"/><rect x="397.09" y="309.99" width="2" height="2"/><rect x="397.09" y="327.46" width="2" height="2"/><rect x="397.09" y="344.93" width="2" height="2"/><rect x="397.09" y="362.40" width="2" height="2"/><rect x="397.09" y="379.87" width="2" height="2"/><rect x="397.09" y="397.34" width="2" height="2"/><rect x="397.09" y="414.81" width="2" height="2"/><rect x="397.09" y="432.28" width="2" height="2"/><rect x="397.09" y="449.75" width="2" height="2"/><rect x="397.09" y="467.22" width="2" height="2"/><rect x="397.09" y="484.69" width="2" height="2"/><rect x="397.09" y="502.16" width="2" height="2"/><rect x="397.09" y="519.63" width="2" height="2"/><rect x="397.09" y="537.10" width="2" height="2"/><rect x="397.09" y="554.57" width="2" height="2"/><rect x="397.09" y="572.04" width="2" height="2"/><rect x="397.09" y="589.51" width="2" height="2"/><rect x="397.09" y="606.98" width="2" height="2"/><rect x="397.09" y="624.45" width="2" height="2"/><rect x="397.09" y="641.92" width="2" height="2"/><rect x="414.56" y="13.00" width="2" height="2"/><rect x="414.56" y="30.47" width="2" height="2"/><rect x="414.56" y="47.94" width="2" height="2"/><rect x="414.56" y="65.41" width="2" height="2"/><rect x="414.56" y="82.88" width="2" height="2"/><rect x="414.56" y="100.35" width="2" height="2"/><rect x="414.56" y="117.82" width="2" height="2"/><rect x="414.56" y="135.29" width="2" height="2"/><rect x="414.56" y="152.76" width="2" height="2"/><rect x="414.56" y="170.23" width="2" height="2"/><rect x="414.56" y="187.70" width="2" height="2"/><rect x="414.56" y="205.17" width="2" height="2"/><rect x="414.56" y="222.64" width="2" height="2"/><rect x="414.56" y="240.11" width="2" height="2"/><rect x="414.56" y="257.58" width="2" height="2"/><rect x="414.56" y="275.05" width="2" height="2"/><rect x="414.56" y="292.52" width="2" height="2"/><rect x="414.56" y="309.99" width="2" height="2"/><rect x="414.56" y="327.46" width="2" height="2"/><rect x="414.56" y="344.93" width="2" height="2"/><rect x="414.56" y="362.40" width="2" height="2"/><rect x="414.56" y="379.87" width="2" height="2"/><rect x="414.56" y="397.34" width="2" height="2"/><rect x="414.56" y="414.81" width="2" height="2"/><rect x="414.56" y="432.28" width="2" height="2"/><rect x="414.56" y="449.75" width="2" height="2"/><rect x="414.56" y="467.22" width="2" height="2"/><rect x="414.56" y="484.69" width="2" height="2"/><rect x="414.56" y="502.16" width="2" height="2"/><rect x="414.56" y="519.63" width="2" height="2"/><rect x="414.56" y="537.10" width="2" height="2"/><rect x="414.56" y="554.57" width="2" height="2"/><rect x="414.56" y="572.04" width="2" height="2"/><rect x="414.56" y="589.51" width="2" height="2"/><rect x="414.56" y="606.98" width="2" height="2"/><rect x="414.56" y="624.45" width="2" height="2"/><rect x="414.56" y="641.92" width="2" height="2"/><rect x="432.03" y="13.00" width="2" height="2"/><rect x="432.03" y="30.47" width="2" height="2"/><rect x="432.03" y="47.94" width="2" height="2"/><rect x="432.03" y="65.41" width="2" height="2"/><rect x="432.03" y="82.88" width="2" height="2"/><rect x="432.03" y="100.35" width="2" height="2"/><rect x="432.03" y="117.82" width="2" height="2"/><rect x="432.03" y="135.29" width="2" height="2"/><rect x="432.03" y="152.76" width="2" height="2"/><rect x="432.03" y="170.23" width="2" height="2"/><rect x="432.03" y="187.70" width="2" height="2"/><rect x="432.03" y="205.17" width="2" height="2"/><rect x="432.03" y="222.64" width="2" height="2"/><rect x="432.03" y="240.11" width="2" height="2"/><rect x="432.03" y="257.58" width="2" height="2"/><rect x="432.03" y="275.05" width="2" height="2"/><rect x="432.03" y="292.52" width="2" height="2"/><rect x="432.03" y="309.99" width="2" height="2"/><rect x="432.03" y="327.46" width="2" height="2"/><rect x="432.03" y="344.93" width="2" height="2"/><rect x="432.03" y="362.40" width="2" height="2"/><rect x="432.03" y="379.87" width="2" height="2"/><rect x="432.03" y="397.34" width="2" height="2"/><rect x="432.03" y="414.81" width="2" height="2"/><rect x="432.03" y="432.28" width="2" height="2"/><rect x="432.03" y="449.75" width="2" height="2"/><rect x="432.03" y="467.22" width="2" height="2"/><rect x="432.03" y="484.69" width="2" height="2"/><rect x="432.03" y="502.16" width="2" height="2"/><rect x="432.03" y="519.63" width="2" height="2"/><rect x="432.03" y="537.10" width="2" height="2"/><rect x="432.03" y="554.57" width="2" height="2"/><rect x="432.03" y="572.04" width="2" height="2"/><rect x="432.03" y="589.51" width="2" height="2"/><rect x="432.03" y="606.98" width="2" height="2"/><rect x="432.03" y="624.45" width="2" height="2"/><rect x="432.03" y="641.92" width="2" height="2"/><rect x="449.50" y="13.00" width="2" height="2"/><rect x="449.50" y="30.47" width="2" height="2"/><rect x="449.50" y="47.94" width="2" height="2"/><rect x="449.50" y="65.41" width="2" height="2"/><rect x="449.50" y="82.88" width="2" height="2"/><rect x="449.50" y="100.35" width="2" height="2"/><rect x="449.50" y="117.82" width="2" height="2"/><rect x="449.50" y="135.29" width="2" height="2"/><rect x="449.50" y="152.76" width="2" height="2"/><rect x="449.50" y="170.23" width="2" height="2"/><rect x="449.50" y="187.70" width="2" height="2"/><rect x="449.50" y="205.17" width="2" height="2"/><rect x="449.50" y="222.64" width="2" height="2"/><rect x="449.50" y="240.11" width="2" height="2"/><rect x="449.50" y="257.58" width="2" height="2"/><rect x="449.50" y="275.05" width="2" height="2"/><rect x="449.50" y="292.52" width="2" height="2"/><rect x="449.50" y="309.99" width="2" height="2"/><rect x="449.50" y="327.46" width="2" height="2"/><rect x="449.50" y="344.93" width="2" height="2"/><rect x="449.50" y="362.40" width="2" height="2"/><rect x="449.50" y="379.87" width="2" height="2"/><rect x="449.50" y="397.34" width="2" height="2"/><rect x="449.50" y="414.81" width="2" height="2"/><rect x="449.50" y="432.28" width="2" height="2"/><rect x="449.50" y="449.75" width="2" height="2"/><rect x="449.50" y="467.22" width="2" height="2"/><rect x="449.50" y="484.69" width="2" height="2"/><rect x="449.50" y="502.16" width="2" height="2"/><rect x="449.50" y="519.63" width="2" height="2"/><rect x="449.50" y="537.10" width="2" height="2"/><rect x="449.50" y="554.57" width="2" height="2"/><rect x="449.50" y="572.04" width="2" height="2"/><rect x="449.50" y="589.51" width="2" height="2"/><rect x="449.50" y="606.98" width="2" height="2"/><rect x="449.50" y="624.45" width="2" height="2"/><rect x="449.50" y="641.92" width="2" height="2"/><rect x="466.97" y="13.00" width="2" height="2"/><rect x="466.97" y="30.47" width="2" height="2"/><rect x="466.97" y="47.94" width="2" height="2"/><rect x="466.97" y="65.41" width="2" height="2"/><rect x="466.97" y="82.88" width="2" height="2"/><rect x="466.97" y="100.35" width="2" height="2"/><rect x="466.97" y="117.82" width="2" height="2"/><rect x="466.97" y="135.29" width="2" height="2"/><rect x="466.97" y="152.76" width="2" height="2"/><rect x="466.97" y="170.23" width="2" height="2"/><rect x="466.97" y="187.70" width="2" height="2"/><rect x="466.97" y="205.17" width="2" height="2"/><rect x="466.97" y="222.64" width="2" height="2"/><rect x="466.97" y="240.11" width="2" height="2"/><rect x="466.97" y="257.58" width="2" height="2"/><rect x="466.97" y="275.05" width="2" height="2"/><rect x="466.97" y="292.52" width="2" height="2"/><rect x="466.97" y="309.99" width="2" height="2"/><rect x="466.97" y="327.46" width="2" height="2"/><rect x="466.97" y="344.93" width="2" height="2"/><rect x="466.97" y="362.40" width="2" height="2"/><rect x="466.97" y="379.87" width="2" height="2"/><rect x="466.97" y="397.34" width="2" height="2"/><rect x="466.97" y="414.81" width="2" height="2"/><rect x="466.97" y="432.28" width="2" height="2"/><rect x="466.97" y="449.75" width="2" height="2"/><rect x="466.97" y="467.22" width="2" height="2"/><rect x="466.97" y="484.69" width="2" height="2"/><rect x="466.97" y="502.16" width="2" height="2"/><rect x="466.97" y="519.63" width="2" height="2"/><rect x="466.97" y="537.10" width="2" height="2"/><rect x="466.97" y="554.57" width="2" height="2"/><rect x="466.97" y="572.04" width="2" height="2"/><rect x="466.97" y="589.51" width="2" height="2"/><rect x="466.97" y="606.98" width="2" height="2"/><rect x="466.97" y="624.45" width="2" height="2"/><rect x="466.97" y="641.92" width="2" height="2"/><rect x="484.44" y="13.00" width="2" height="2"/><rect x="484.44" y="30.47" width="2" height="2"/><rect x="484.44" y="47.94" width="2" height="2"/><rect x="484.44" y="65.41" width="2" height="2"/><rect x="484.44" y="82.88" width="2" height="2"/><rect x="484.44" y="100.35" width="2" height="2"/><rect x="484.44" y="117.82" width="2" height="2"/><rect x="484.44" y="135.29" width="2" height="2"/><rect x="484.44" y="152.76" width="2" height="2"/><rect x="484.44" y="170.23" width="2" height="2"/><rect x="484.44" y="187.70" width="2" height="2"/><rect x="484.44" y="205.17" width="2" height="2"/><rect x="484.44" y="222.64" width="2" height="2"/><rect x="484.44" y="240.11" width="2" height="2"/><rect x="484.44" y="257.58" width="2" height="2"/><rect x="484.44" y="275.05" width="2" height="2"/><rect x="484.44" y="292.52" width="2" height="2"/><rect x="484.44" y="309.99" width="2" height="2"/><rect x="484.44" y="327.46" width="2" height="2"/><rect x="484.44" y="344.93" width="2" height="2"/><rect x="484.44" y="362.40" width="2" height="2"/><rect x="484.44" y="379.87" width="2" height="2"/><rect x="484.44" y="397.34" width="2" height="2"/><rect x="484.44" y="414.81" width="2" height="2"/><rect x="484.44" y="432.28" width="2" height="2"/><rect x="484.44" y="449.75" width="2" height="2"/><rect x="484.44" y="467.22" width="2" height="2"/><rect x="484.44" y="484.69" width="2" height="2"/><rect x="484.44" y="502.16" width="2" height="2"/><rect x="484.44" y="519.63" width="2" height="2"/><rect x="484.44" y="537.10" width="2" height="2"/><rect x="484.44" y="554.57" width="2" height="2"/><rect x="484.44" y="572.04" width="2" height="2"/><rect x="484.44" y="589.51" width="2" height="2"/><rect x="484.44" y="606.98" width="2" height="2"/><rect x="484.44" y="624.45" width="2" height="2"/><rect x="484.44" y="641.92" width="2" height="2"/><rect x="501.91" y="13.00" width="2" height="2"/><rect x="501.91" y="30.47" width="2" height="2"/><rect x="501.91" y="47.94" width="2" height="2"/><rect x="501.91" y="65.41" width="2" height="2"/><rect x="501.91" y="82.88" width="2" height="2"/><rect x="501.91" y="100.35" width="2" height="2"/><rect x="501.91" y="117.82" width="2" height="2"/><rect x="501.91" y="135.29" width="2" height="2"/><rect x="501.91" y="152.76" width="2" height="2"/><rect x="501.91" y="170.23" width="2" height="2"/><rect x="501.91" y="187.70" width="2" height="2"/><rect x="501.91" y="205.17" width="2" height="2"/><rect x="501.91" y="222.64" width="2" height="2"/><rect x="501.91" y="240.11" width="2" height="2"/><rect x="501.91" y="257.58" width="2" height="2"/><rect x="501.91" y="275.05" width="2" height="2"/><rect x="501.91" y="292.52" width="2" height="2"/><rect x="501.91" y="309.99" width="2" height="2"/><rect x="501.91" y="327.46" width="2" height="2"/><rect x="501.91" y="344.93" width="2" height="2"/><rect x="501.91" y="362.40" width="2" height="2"/><rect x="501.91" y="379.87" width="2" height="2"/><rect x="501.91" y="397.34" width="2" height="2"/><rect x="501.91" y="414.81" width="2" height="2"/><rect x="501.91" y="432.28" width="2" height="2"/><rect x="501.91" y="449.75" width="2" height="2"/><rect x="501.91" y="467.22" width="2" height="2"/><rect x="501.91" y="484.69" width="2" height="2"/><rect x="501.91" y="502.16" width="2" height="2"/><rect x="501.91" y="519.63" width="2" height="2"/><rect x="501.91" y="537.10" width="2" height="2"/><rect x="501.91" y="554.57" width="2" height="2"/><rect x="501.91" y="572.04" width="2" height="2"/><rect x="501.91" y="589.51" width="2" height="2"/><rect x="501.91" y="606.98" width="2" height="2"/><rect x="501.91" y="624.45" width="2" height="2"/><rect x="501.91" y="641.92" width="2" height="2"/><rect x="519.38" y="13.00" width="2" height="2"/><rect x="519.38" y="30.47" width="2" height="2"/><rect x="519.38" y="47.94" width="2" height="2"/><rect x="519.38" y="65.41" width="2" height="2"/><rect x="519.38" y="82.88" width="2" height="2"/><rect x="519.38" y="100.35" width="2" height="2"/><rect x="519.38" y="117.82" width="2" height="2"/><rect x="519.38" y="135.29" width="2" height="2"/><rect x="519.38" y="152.76" width="2" height="2"/><rect x="519.38" y="170.23" width="2" height="2"/><rect x="519.38" y="187.70" width="2" height="2"/><rect x="519.38" y="205.17" width="2" height="2"/><rect x="519.38" y="222.64" width="2" height="2"/><rect x="519.38" y="240.11" width="2" height="2"/><rect x="519.38" y="257.58" width="2" height="2"/><rect x="519.38" y="275.05" width="2" height="2"/><rect x="519.38" y="292.52" width="2" height="2"/><rect x="519.38" y="309.99" width="2" height="2"/><rect x="519.38" y="327.46" width="2" height="2"/><rect x="519.38" y="344.93" width="2" height="2"/><rect x="519.38" y="362.40" width="2" height="2"/><rect x="519.38" y="379.87" width="2" height="2"/><rect x="519.38" y="397.34" width="2" height="2"/><rect x="519.38" y="414.81" width="2" height="2"/><rect x="519.38" y="432.28" width="2" height="2"/><rect x="519.38" y="449.75" width="2" height="2"/><rect x="519.38" y="467.22" width="2" height="2"/><rect x="519.38" y="484.69" width="2" height="2"/><rect x="519.38" y="502.16" width="2" height="2"/><rect x="519.38" y="519.63" width="2" height="2"/><rect x="519.38" y="537.10" width="2" height="2"/><rect x="519.38" y="554.57" width="2" height="2"/><rect x="519.38" y="572.04" width="2" height="2"/><rect x="519.38" y="589.51" width="2" height="2"/><rect x="519.38" y="606.98" width="2" height="2"/><rect x="519.38" y="624.45" width="2" height="2"/><rect x="519.38" y="641.92" width="2" height="2"/><rect x="536.85" y="13.00" width="2" height="2"/><rect x="536.85" y="30.47" width="2" height="2"/><rect x="536.85" y="47.94" width="2" height="2"/><rect x="536.85" y="65.41" width="2" height="2"/><rect x="536.85" y="82.88" width="2" height="2"/><rect x="536.85" y="100.35" width="2" height="2"/><rect x="536.85" y="117.82" width="2" height="2"/><rect x="536.85" y="135.29" width="2" height="2"/><rect x="536.85" y="152.76" width="2" height="2"/><rect x="536.85" y="170.23" width="2" height="2"/><rect x="536.85" y="187.70" width="2" height="2"/><rect x="536.85" y="205.17" width="2" height="2"/><rect x="536.85" y="222.64" width="2" height="2"/><rect x="536.85" y="240.11" width="2" height="2"/><rect x="536.85" y="257.58" width="2" height="2"/><rect x="536.85" y="275.05" width="2" height="2"/><rect x="536.85" y="292.52" width="2" height="2"/><rect x="536.85" y="309.99" width="2" height="2"/><rect x="536.85" y="327.46" width="2" height="2"/><rect x="536.85" y="344.93" width="2" height="2"/><rect x="536.85" y="362.40" width="2" height="2"/><rect x="536.85" y="379.87" width="2" height="2"/><rect x="536.85" y="397.34" width="2" height="2"/><rect x="536.85" y="414.81" width="2" height="2"/><rect x="536.85" y="432.28" width="2" height="2"/><rect x="536.85" y="449.75" width="2" height="2"/><rect x="536.85" y="467.22" width="2" height="2"/><rect x="536.85" y="484.69" width="2" height="2"/><rect x="536.85" y="502.16" width="2" height="2"/><rect x="536.85" y="519.63" width="2" height="2"/><rect x="536.85" y="537.10" width="2" height="2"/><rect x="536.85" y="554.57" width="2" height="2"/><rect x="536.85" y="572.04" width="2" height="2"/><rect x="536.85" y="589.51" width="2" height="2"/><rect x="536.85" y="606.98" width="2" height="2"/><rect x="536.85" y="624.45" width="2" height="2"/><rect x="536.85" y="641.92" width="2" height="2"/><rect x="554.32" y="13.00" width="2" height="2"/><rect x="554.32" y="30.47" width="2" height="2"/><rect x="554.32" y="47.94" width="2" height="2"/><rect x="554.32" y="65.41" width="2" height="2"/><rect x="554.32" y="82.88" width="2" height="2"/><rect x="554.32" y="100.35" width="2" height="2"/><rect x="554.32" y="117.82" width="2" height="2"/><rect x="554.32" y="135.29" width="2" height="2"/><rect x="554.32" y="152.76" width="2" height="2"/><rect x="554.32" y="170.23" width="2" height="2"/><rect x="554.32" y="187.70" width="2" height="2"/><rect x="554.32" y="205.17" width="2" height="2"/><rect x="554.32" y="222.64" width="2" height="2"/><rect x="554.32" y="240.11" width="2" height="2"/><rect x="554.32" y="257.58" width="2" height="2"/><rect x="554.32" y="275.05" width="2" height="2"/><rect x="554.32" y="292.52" width="2" height="2"/><rect x="554.32" y="309.99" width="2" height="2"/><rect x="554.32" y="327.46" width="2" height="2"/><rect x="554.32" y="344.93" width="2" height="2"/><rect x="554.32" y="362.40" width="2" height="2"/><rect x="554.32" y="379.87" width="2" height="2"/><rect x="554.32" y="397.34" width="2" height="2"/><rect x="554.32" y="414.81" width="2" height="2"/><rect x="554.32" y="432.28" width="2" height="2"/><rect x="554.32" y="449.75" width="2" height="2"/><rect x="554.32" y="467.22" width="2" height="2"/><rect x="554.32" y="484.69" width="2" height="2"/><rect x="554.32" y="502.16" width="2" height="2"/><rect x="554.32" y="519.63" width="2" height="2"/><rect x="554.32" y="537.10" width="2" height="2"/><rect x="554.32" y="554.57" width="2" height="2"/><rect x="554.32" y="572.04" width="2" height="2"/><rect x="554.32" y="589.51" width="2" height="2"/><rect x="554.32" y="606.98" width="2" height="2"/><rect x="554.32" y="624.45" width="2" height="2"/><rect x="554.32" y="641.92" width="2" height="2"/><rect x="571.79" y="13.00" width="2" height="2"/><rect x="571.79" y="30.47" width="2" height="2"/><rect x="571.79" y="47.94" width="2" height="2"/><rect x="571.79" y="65.41" width="2" height="2"/><rect x="571.79" y="82.88" width="2" height="2"/><rect x="571.79" y="100.35" width="2" height="2"/><rect x="571.79" y="117.82" width="2" height="2"/><rect x="571.79" y="135.29" width="2" height="2"/><rect x="571.79" y="152.76" width="2" height="2"/><rect x="571.79" y="170.23" width="2" height="2"/><rect x="571.79" y="187.70" width="2" height="2"/><rect x="571.79" y="205.17" width="2" height="2"/><rect x="571.79" y="222.64" width="2" height="2"/><rect x="571.79" y="240.11" width="2" height="2"/><rect x="571.79" y="257.58" width="2" height="2"/><rect x="571.79" y="275.05" width="2" height="2"/><rect x="571.79" y="292.52" width="2" height="2"/><rect x="571.79" y="309.99" width="2" height="2"/><rect x="571.79" y="327.46" width="2" height="2"/><rect x="571.79" y="344.93" width="2" height="2"/><rect x="571.79" y="362.40" width="2" height="2"/><rect x="571.79" y="379.87" width="2" height="2"/><rect x="571.79" y="397.34" width="2" height="2"/><rect x="571.79" y="414.81" width="2" height="2"/><rect x="571.79" y="432.28" width="2" height="2"/><rect x="571.79" y="449.75" width="2" height="2"/><rect x="571.79" y="467.22" width="2" height="2"/><rect x="571.79" y="484.69" width="2" height="2"/><rect x="571.79" y="502.16" width="2" height="2"/><rect x="571.79" y="519.63" width="2" height="2"/><rect x="571.79" y="537.10" width="2" height="2"/><rect x="571.79" y="554.57" width="2" height="2"/><rect x="571.79" y="572.04" width="2" height="2"/><rect x="571.79" y="589.51" width="2" height="2"/><rect x="571.79" y="606.98" width="2" height="2"/><rect x="571.79" y="624.45" width="2" height="2"/><rect x="571.79" y="641.92" width="2" height="2"/><rect x="589.26" y="13.00" width="2" height="2"/><rect x="589.26" y="30.47" width="2" height="2"/><rect x="589.26" y="47.94" width="2" height="2"/><rect x="589.26" y="65.41" width="2" height="2"/><rect x="589.26" y="82.88" width="2" height="2"/><rect x="589.26" y="100.35" width="2" height="2"/><rect x="589.26" y="117.82" width="2" height="2"/><rect x="589.26" y="135.29" width="2" height="2"/><rect x="589.26" y="152.76" width="2" height="2"/><rect x="589.26" y="170.23" width="2" height="2"/><rect x="589.26" y="187.70" width="2" height="2"/><rect x="589.26" y="205.17" width="2" height="2"/><rect x="589.26" y="222.64" width="2" height="2"/><rect x="589.26" y="240.11" width="2" height="2"/><rect x="589.26" y="257.58" width="2" height="2"/><rect x="589.26" y="275.05" width="2" height="2"/><rect x="589.26" y="292.52" width="2" height="2"/><rect x="589.26" y="309.99" width="2" height="2"/><rect x="589.26" y="327.46" width="2" height="2"/><rect x="589.26" y="344.93" width="2" height="2"/><rect x="589.26" y="362.40" width="2" height="2"/><rect x="589.26" y="379.87" width="2" height="2"/><rect x="589.26" y="397.34" width="2" height="2"/><rect x="589.26" y="414.81" width="2" height="2"/><rect x="589.26" y="432.28" width="2" height="2"/><rect x="589.26" y="449.75" width="2" height="2"/><rect x="589.26" y="467.22" width="2" height="2"/><rect x="589.26" y="484.69" width="2" height="2"/><rect x="589.26" y="502.16" width="2" height="2"/><rect x="589.26" y="519.63" width="2" height="2"/><rect x="589.26" y="537.10" width="2" height="2"/><rect x="589.26" y="554.57" width="2" height="2"/><rect x="589.26" y="572.04" width="2" height="2"/><rect x="589.26" y="589.51" width="2" height="2"/><rect x="589.26" y="606.98" width="2" height="2"/><rect x="589.26" y="624.45" width="2" height="2"/><rect x="589.26" y="641.92" width="2" height="2"/><rect x="606.73" y="13.00" width="2" height="2"/><rect x="606.73" y="30.47" width="2" height="2"/><rect x="606.73" y="47.94" width="2" height="2"/><rect x="606.73" y="65.41" width="2" height="2"/><rect x="606.73" y="82.88" width="2" height="2"/><rect x="606.73" y="100.35" width="2" height="2"/><rect x="606.73" y="117.82" width="2" height="2"/><rect x="606.73" y="135.29" width="2" height="2"/><rect x="606.73" y="152.76" width="2" height="2"/><rect x="606.73" y="170.23" width="2" height="2"/><rect x="606.73" y="187.70" width="2" height="2"/><rect x="606.73" y="205.17" width="2" height="2"/><rect x="606.73" y="222.64" width="2" height="2"/><rect x="606.73" y="240.11" width="2" height="2"/><rect x="606.73" y="257.58" width="2" height="2"/><rect x="606.73" y="275.05" width="2" height="2"/><rect x="606.73" y="292.52" width="2" height="2"/><rect x="606.73" y="309.99" width="2" height="2"/><rect x="606.73" y="327.46" width="2" height="2"/><rect x="606.73" y="344.93" width="2" height="2"/><rect x="606.73" y="362.40" width="2" height="2"/><rect x="606.73" y="379.87" width="2" height="2"/><rect x="606.73" y="397.34" width="2" height="2"/><rect x="606.73" y="414.81" width="2" height="2"/><rect x="606.73" y="432.28" width="2" height="2"/><rect x="606.73" y="449.75" width="2" height="2"/><rect x="606.73" y="467.22" width="2" height="2"/><rect x="606.73" y="484.69" width="2" height="2"/><rect x="606.73" y="502.16" width="2" height="2"/><rect x="606.73" y="519.63" width="2" height="2"/><rect x="606.73" y="537.10" width="2" height="2"/><rect x="606.73" y="554.57" width="2" height="2"/><rect x="606.73" y="572.04" width="2" height="2"/><rect x="606.73" y="589.51" width="2" height="2"/><rect x="606.73" y="606.98" width="2" height="2"/><rect x="606.73" y="624.45" width="2" height="2"/><rect x="606.73" y="641.92" width="2" height="2"/><rect x="624.20" y="13.00" width="2" height="2"/><rect x="624.20" y="30.47" width="2" height="2"/><rect x="624.20" y="47.94" width="2" height="2"/><rect x="624.20" y="65.41" width="2" height="2"/><rect x="624.20" y="82.88" width="2" height="2"/><rect x="624.20" y="100.35" width="2" height="2"/><rect x="624.20" y="117.82" width="2" height="2"/><rect x="624.20" y="135.29" width="2" height="2"/><rect x="624.20" y="152.76" width="2" height="2"/><rect x="624.20" y="170.23" width="2" height="2"/><rect x="624.20" y="187.70" width="2" height="2"/><rect x="624.20" y="205.17" width="2" height="2"/><rect x="624.20" y="222.64" width="2" height="2"/><rect x="624.20" y="240.11" width="2" height="2"/><rect x="624.20" y="257.58" width="2" height="2"/><rect x="624.20" y="275.05" width="2" height="2"/><rect x="624.20" y="292.52" width="2" height="2"/><rect x="624.20" y="309.99" width="2" height="2"/><rect x="624.20" y="327.46" width="2" height="2"/><rect x="624.20" y="344.93" width="2" height="2"/><rect x="624.20" y="362.40" width="2" height="2"/><rect x="624.20" y="379.87" width="2" height="2"/><rect x="624.20" y="397.34" width="2" height="2"/><rect x="624.20" y="414.81" width="2" height="2"/><rect x="624.20" y="432.28" width="2" height="2"/><rect x="624.20" y="449.75" width="2" height="2"/><rect x="624.20" y="467.22" width="2" height="2"/><rect x="624.20" y="484.69" width="2" height="2"/><rect x="624.20" y="502.16" width="2" height="2"/><rect x="624.20" y="519.63" width="2" height="2"/><rect x="624.20" y="537.10" width="2" height="2"/><rect x="624.20" y="554.57" width="2" height="2"/><rect x="624.20" y="572.04" width="2" height="2"/><rect x="624.20" y="589.51" width="2" height="2"/><rect x="624.20" y="606.98" width="2" height="2"/><rect x="624.20" y="624.45" width="2" height="2"/><rect x="624.20" y="641.92" width="2" height="2"/><rect x="641.67" y="13.00" width="2" height="2"/><rect x="641.67" y="30.47" width="2" height="2"/><rect x="641.67" y="47.94" width="2" height="2"/><rect x="641.67" y="65.41" width="2" height="2"/><rect x="641.67" y="82.88" width="2" height="2"/><rect x="641.67" y="100.35" width="2" height="2"/><rect x="641.67" y="117.82" width="2" height="2"/><rect x="641.67" y="135.29" width="2" height="2"/><rect x="641.67" y="152.76" width="2" height="2"/><rect x="641.67" y="170.23" width="2" height="2"/><rect x="641.67" y="187.70" width="2" height="2"/><rect x="641.67" y="205.17" width="2" height="2"/><rect x="641.67" y="222.64" width="2" height="2"/><rect x="641.67" y="240.11" width="2" height="2"/><rect x="641.67" y="257.58" width="2" height="2"/><rect x="641.67" y="275.05" width="2" height="2"/><rect x="641.67" y="292.52" width="2" height="2"/><rect x="641.67" y="309.99" width="2" height="2"/><rect x="641.67" y="327.46" width="2" height="2"/><rect x="641.67" y="344.93" width="2" height="2"/><rect x="641.67" y="362.40" width="2" height="2"/><rect x="641.67" y="379.87" width="2" height="2"/><rect x="641.67" y="397.34" width="2" height="2"/><rect x="641.67" y="414.81" width="2" height="2"/><rect x="641.67" y="432.28" width="2" height="2"/><rect x="641.67" y="449.75" width="2" height="2"/><rect x="641.67" y="467.22" width="2" height="2"/><rect x="641.67" y="484.69" width="2" height="2"/><rect x="641.67" y="502.16" width="2" height="2"/><rect x="641.67" y="519.63" width="2" height="2"/><rect x="641.67" y="537.10" width="2" height="2"/><rect x="641.67" y="554.57" width="2" height="2"/><rect x="641.67" y="572.04" width="2" height="2"/><rect x="641.67" y="589.51" width="2" height="2"/><rect x="641.67" y="606.98" width="2" height="2"/><rect x="641.67" y="624.45" width="2" height="2"/><rect x="641.67" y="641.92" width="2" height="2"/><rect x="659.14" y="13.00" width="2" height="2"/><rect x="659.14" y="30.47" width="2" height="2"/><rect x="659.14" y="47.94" width="2" height="2"/><rect x="659.14" y="65.41" width="2" height="2"/><rect x="659.14" y="82.88" width="2" height="2"/><rect x="659.14" y="100.35" width="2" height="2"/><rect x="659.14" y="117.82" width="2" height="2"/><rect x="659.14" y="135.29" width="2" height="2"/><rect x="659.14" y="152.76" width="2" height="2"/><rect x="659.14" y="170.23" width="2" height="2"/><rect x="659.14" y="187.70" width="2" height="2"/><rect x="659.14" y="205.17" width="2" height="2"/><rect x="659.14" y="222.64" width="2" height="2"/><rect x="659.14" y="240.11" width="2" height="2"/><rect x="659.14" y="257.58" width="2" height="2"/><rect x="659.14" y="275.05" width="2" height="2"/><rect x="659.14" y="292.52" width="2" height="2"/><rect x="659.14" y="309.99" width="2" height="2"/><rect x="659.14" y="327.46" width="2" height="2"/><rect x="659.14" y="344.93" width="2" height="2"/><rect x="659.14" y="362.40" width="2" height="2"/><rect x="659.14" y="379.87" width="2" height="2"/><rect x="659.14" y="397.34" width="2" height="2"/><rect x="659.14" y="414.81" width="2" height="2"/><rect x="659.14" y="432.28" width="2" height="2"/><rect x="659.14" y="449.75" width="2" height="2"/><rect x="659.14" y="467.22" width="2" height="2"/><rect x="659.14" y="484.69" width="2" height="2"/><rect x="659.14" y="502.16" width="2" height="2"/><rect x="659.14" y="519.63" width="2" height="2"/><rect x="659.14" y="537.10" width="2" height="2"/><rect x="659.14" y="554.57" width="2" height="2"/><rect x="659.14" y="572.04" width="2" height="2"/><rect x="659.14" y="589.51" width="2" height="2"/><rect x="659.14" y="606.98" width="2" height="2"/><rect x="659.14" y="624.45" width="2" height="2"/><rect x="659.14" y="641.92" width="2" height="2"/><rect x="676.61" y="13.00" width="2" height="2"/><rect x="676.61" y="30.47" width="2" height="2"/><rect x="676.61" y="47.94" width="2" height="2"/><rect x="676.61" y="65.41" width="2" height="2"/><rect x="676.61" y="82.88" width="2" height="2"/><rect x="676.61" y="100.35" width="2" height="2"/><rect x="676.61" y="117.82" width="2" height="2"/><rect x="676.61" y="135.29" width="2" height="2"/><rect x="676.61" y="152.76" width="2" height="2"/><rect x="676.61" y="170.23" width="2" height="2"/><rect x="676.61" y="187.70" width="2" height="2"/><rect x="676.61" y="205.17" width="2" height="2"/><rect x="676.61" y="222.64" width="2" height="2"/><rect x="676.61" y="240.11" width="2" height="2"/><rect x="676.61" y="257.58" width="2" height="2"/><rect x="676.61" y="275.05" width="2" height="2"/><rect x="676.61" y="292.52" width="2" height="2"/><rect x="676.61" y="309.99" width="2" height="2"/><rect x="676.61" y="327.46" width="2" height="2"/><rect x="676.61" y="344.93" width="2" height="2"/><rect x="676.61" y="362.40" width="2" height="2"/><rect x="676.61" y="379.87" width="2" height="2"/><rect x="676.61" y="397.34" width="2" height="2"/><rect x="676.61" y="414.81" width="2" height="2"/><rect x="676.61" y="432.28" width="2" height="2"/><rect x="676.61" y="449.75" width="2" height="2"/><rect x="676.61" y="467.22" width="2" height="2"/><rect x="676.61" y="484.69" width="2" height="2"/><rect x="676.61" y="502.16" width="2" height="2"/><rect x="676.61" y="519.63" width="2" height="2"/><rect x="676.61" y="537.10" width="2" height="2"/><rect x="676.61" y="554.57" width="2" height="2"/><rect x="676.61" y="572.04" width="2" height="2"/><rect x="676.61" y="589.51" width="2" height="2"/><rect x="676.61" y="606.98" width="2" height="2"/><rect x="676.61" y="624.45" width="2" height="2"/><rect x="676.61" y="641.92" width="2" height="2"/><rect x="694.08" y="13.00" width="2" height="2"/><rect x="694.08" y="30.47" width="2" height="2"/><rect x="694.08" y="47.94" width="2" height="2"/><rect x="694.08" y="65.41" width="2" height="2"/><rect x="694.08" y="82.88" width="2" height="2"/><rect x="694.08" y="100.35" width="2" height="2"/><rect x="694.08" y="117.82" width="2" height="2"/><rect x="694.08" y="135.29" width="2" height="2"/><rect x="694.08" y="152.76" width="2" height="2"/><rect x="694.08" y="170.23" width="2" height="2"/><rect x="694.08" y="187.70" width="2" height="2"/><rect x="694.08" y="205.17" width="2" height="2"/><rect x="694.08" y="222.64" width="2" height="2"/><rect x="694.08" y="240.11" width="2" height="2"/><rect x="694.08" y="257.58" width="2" height="2"/><rect x="694.08" y="275.05" width="2" height="2"/><rect x="694.08" y="292.52" width="2" height="2"/><rect x="694.08" y="309.99" width="2" height="2"/><rect x="694.08" y="327.46" width="2" height="2"/><rect x="694.08" y="344.93" width="2" height="2"/><rect x="694.08" y="362.40" width="2" height="2"/><rect x="694.08" y="379.87" width="2" height="2"/><rect x="694.08" y="397.34" width="2" height="2"/><rect x="694.08" y="414.81" width="2" height="2"/><rect x="694.08" y="432.28" width="2" height="2"/><rect x="694.08" y="449.75" width="2" height="2"/><rect x="694.08" y="467.22" width="2" height="2"/><rect x="694.08" y="484.69" width="2" height="2"/><rect x="694.08" y="502.16" width="2" height="2"/><rect x="694.08" y="519.63" width="2" height="2"/><rect x="694.08" y="537.10" width="2" height="2"/><rect x="694.08" y="554.57" width="2" height="2"/><rect x="694.08" y="572.04" width="2" height="2"/><rect x="694.08" y="589.51" width="2" height="2"/><rect x="694.08" y="606.98" width="2" height="2"/><rect x="694.08" y="624.45" width="2" height="2"/><rect x="694.08" y="641.92" width="2" height="2"/></g></svg>
<div style="left:0px;top:0px;width:702px;height:1px;background:#232323;border-radius:0px;"></div>
<div class="t" style="left:-186.60px;top:17.04px;width:200px;text-align:right;font-size:12px;line-height:12px;color:#dcdcdc;letter-spacing:0.12px;">Material</div>
<svg style="left:0px;top:0px;" width="702" height="648" viewBox="0 0 702 648"><g stroke="#6b6bd0" stroke-width="1.6" fill="none"><path d="M-20 146 L13.5 158"/><path d="M135 110 L170.5 242"/></g></svg>
<div style="left:13.3px;top:80px;width:121.7px;height:306px;background:#303030;border-radius:4px;box-shadow:0 1px 6px rgba(0,0,0,0.45);"></div>
<div style="left:13.3px;top:80px;width:121.7px;height:17.4px;background:#3d3d85;border-radius:0px;border-radius:4px 4px 0 0;"></div>
<svg style="left:22.25px;top:85.1px;" width="9" height="5.8" viewBox="0 0 9 5.8"><path d="M1 1 L4.5 4.8 L8 1" stroke="#cfcfcf" stroke-width="1.2" fill="none"/></svg>
<div class="t" style="left:35.75px;top:82.62px;font-size:9.9px;line-height:9.9px;color:#e6e6e6;">Mapping</div>
<div class="t" style="left:26.00px;top:104.54px;width:100px;text-align:right;font-size:9.4px;line-height:9.4px;color:#e6e6e6;">Vector</div>
<svg style="left:130.65px;top:105.4px;" width="9.2" height="9.2" viewBox="0 0 9.2 9.2"><circle cx="4.6" cy="4.6" r="3.6" fill="#6363c7" stroke="#111" stroke-opacity="0.7" stroke-width="0.9"/></svg>
<div class="t" style="left:23.25px;top:131.29px;font-size:9.4px;line-height:9.4px;color:#e6e6e6;">Type:</div>
<div style="left:57.5px;top:128.75px;width:69px;height:15.5px;background:#282828;border-radius:3px;border:1px solid #404040;"></div>
<div class="t" style="left:64.25px;top:131.29px;font-size:9.4px;line-height:9.4px;color:#e6e6e6;">Point</div>
<svg style="left:117.5px;top:135.0px;" width="7" height="5" viewBox="0 0 7 5"><path d="M1 1 L3.5 4 L6 1" stroke="#d0d0d0" stroke-width="1.1" fill="none"/></svg>
<svg style="left:8.65px;top:153.4px;" width="9.2" height="9.2" viewBox="0 0 9.2 9.2"><circle cx="4.6" cy="4.6" r="3.6" fill="#6363c7" stroke="#111" stroke-opacity="0.7" stroke-width="0.9"/></svg>
<div class="t" style="left:23.25px;top:153.04px;font-size:9.4px;line-height:9.4px;color:#e6e6e6;">Vector</div>
<svg style="left:8.65px;top:172.65px;" width="9.2" height="9.2" viewBox="0 0 9.2 9.2"><circle cx="4.6" cy="4.6" r="3.6" fill="#6363c7" stroke="#111" stroke-opacity="0.7" stroke-width="0.9"/></svg>
<div class="t" style="left:23.25px;top:172.54px;font-size:9.4px;line-height:9.4px;color:#e6e6e6;">Location:</div>
<div style="left:23px;top:186.75px;width:103.25px;height:50px;background:#545454;border-radius:3px;"></div>
<div style="left:23px;top:202.91666666666666px;width:103.25px;height:1px;background:#3a3a3a;border-radius:0px;"></div>
<div style="left:23px;top:219.58333333333334px;width:103.25px;height:1px;background:#3a3a3a;border-radius:0px;"></div>
<div class="t" style="left:29.50px;top:190.04px;width:20px;text-align:center;font-size:9.4px;line-height:9.4px;color:#e6e6e6;">X</div>
<div class="t" style="left:34.85px;top:190.04px;width:80px;text-align:right;font-size:9.4px;line-height:9.4px;color:#e6e6e6;letter-spacing:0.6px;">0 m</div>
<div class="t" style="left:29.50px;top:207.04px;width:20px;text-align:center;font-size:9.4px;line-height:9.4px;color:#e6e6e6;">Y</div>
<div class="t" style="left:34.85px;top:207.04px;width:80px;text-align:right;font-size:9.4px;line-height:9.4px;color:#e6e6e6;letter-spacing:0.6px;">0 m</div>
<div class="t" style="left:29.50px;top:223.79px;width:20px;text-align:center;font-size:9.4px;line-height:9.4px;color:#e6e6e6;">Z</div>
<div class="t" style="left:34.85px;top:223.79px;width:80px;text-align:right;font-size:9.4px;line-height:9.4px;color:#e6e6e6;letter-spacing:0.6px;">0 m</div>
<svg style="left:8.65px;top:244.4px;" width="9.2" height="9.2" viewBox="0 0 9.2 9.2"><circle cx="4.6" cy="4.6" r="3.6" fill="#6363c7" stroke="#111" stroke-opacity="0.7" stroke-width="0.9"/></svg>
<div class="t" style="left:23.25px;top:244.04px;font-size:9.4px;line-height:9.4px;color:#e6e6e6;">Rotation:</div>
<div style="left:23px;top:258.5px;width:103.25px;height:50.5px;background:#545454;border-radius:3px;"></div>
<div style="left:23px;top:274.8333333333333px;width:103.25px;height:1px;background:#3a3a3a;border-radius:0px;"></div>
<div style="left:23px;top:291.6666666666667px;width:103.25px;height:1px;background:#3a3a3a;border-radius:0px;"></div>
<div class="t" style="left:29.50px;top:261.04px;width:20px;text-align:center;font-size:9.4px;line-height:9.4px;color:#e6e6e6;">X</div>
<div class="t" style="left:34.85px;top:261.04px;width:80px;text-align:right;font-size:9.4px;line-height:9.4px;color:#e6e6e6;letter-spacing:0.6px;">0°</div>
<div class="t" style="left:29.50px;top:278.04px;width:20px;text-align:center;font-size:9.4px;line-height:9.4px;color:#e6e6e6;">Y</div>
<div class="t" style="left:34.85px;top:278.04px;width:80px;text-align:right;font-size:9.4px;line-height:9.4px;color:#e6e6e6;letter-spacing:0.6px;">0°</div>
<div class="t" style="left:29.50px;top:296.04px;width:20px;text-align:center;font-size:9.4px;line-height:9.4px;color:#e6e6e6;">Z</div>
<div class="t" style="left:34.85px;top:296.04px;width:80px;text-align:right;font-size:9.4px;line-height:9.4px;color:#e6e6e6;letter-spacing:0.6px;">0°</div>
<svg style="left:8.65px;top:315.65px;" width="9.2" height="9.2" viewBox="0 0 9.2 9.2"><circle cx="4.6" cy="4.6" r="3.6" fill="#6363c7" stroke="#111" stroke-opacity="0.7" stroke-width="0.9"/></svg>
<div class="t" style="left:23.25px;top:315.29px;font-size:9.4px;line-height:9.4px;color:#e6e6e6;">Scale:</div>
<div style="left:23px;top:329.75px;width:103.25px;height:51.25px;background:#545454;border-radius:3px;"></div>
<div style="left:23px;top:346.3333333333333px;width:103.25px;height:1px;background:#3a3a3a;border-radius:0px;"></div>
<div style="left:23px;top:363.4166666666667px;width:103.25px;height:1px;background:#3a3a3a;border-radius:0px;"></div>
<div class="t" style="left:29.50px;top:333.04px;width:20px;text-align:center;font-size:9.4px;line-height:9.4px;color:#e6e6e6;">X</div>
<div class="t" style="left:34.85px;top:333.04px;width:80px;text-align:right;font-size:9.4px;line-height:9.4px;color:#e6e6e6;letter-spacing:0.6px;">1.000</div>
<div class="t" style="left:29.50px;top:350.29px;width:20px;text-align:center;font-size:9.4px;line-height:9.4px;color:#e6e6e6;">Y</div>
<div class="t" style="left:34.85px;top:350.29px;width:80px;text-align:right;font-size:9.4px;line-height:9.4px;color:#e6e6e6;letter-spacing:0.6px;">1.000</div>
<div class="t" style="left:29.50px;top:367.29px;width:20px;text-align:center;font-size:9.4px;line-height:9.4px;color:#e6e6e6;">Z</div>
<div class="t" style="left:34.85px;top:367.29px;width:80px;text-align:right;font-size:9.4px;line-height:9.4px;color:#e6e6e6;letter-spacing:0.6px;">1.000</div>
<div style="left:171px;top:80px;width:209px;height:175px;background:#303030;border-radius:4px;box-shadow:0 1px 6px rgba(0,0,0,0.45);"></div>
<div style="left:171px;top:80px;width:209px;height:17.4px;background:#7a4a1f;border-radius:0px;border-radius:4px 4px 0 0;"></div>
<svg style="left:179.0px;top:85.1px;" width="9" height="5.8" viewBox="0 0 9 5.8"><path d="M1 1 L4.5 4.8 L8 1" stroke="#cfcfcf" stroke-width="1.2" fill="none"/></svg>
<div class="t" style="left:192.50px;top:83.04px;font-size:9.4px;line-height:9.4px;color:#e6e6e6;">Image Texture</div>
<div style="left:179.8px;top:147.5px;width:110px;height:16px;background:#282828;border-radius:3px;border:1px solid #404040;"></div>
<div style="left:206.5px;top:148px;width:80px;height:15px;background:#545454;border-radius:0px;"></div>
<svg style="left:182px;top:148px;" width="16" height="15" viewBox="0 0 16 15"><rect x="1.5" y="1.5" width="12" height="12" rx="1" fill="none" stroke="#bdbdbd" stroke-width="1.1"/><path d="M1 14 L5.5 5.5 L10 14 Z" fill="#e6e6e6"/><circle cx="11" cy="4.5" r="1.8" fill="#e6e6e6"/><rect x="7.5" y="12" width="4" height="3" fill="#282828"/></svg>
<svg style="left:197.8px;top:153.5px;" width="7" height="5" viewBox="0 0 7 5"><path d="M1 1 L3.5 4 L6 1" stroke="#e0e0e0" stroke-width="1.1" fill="none"/></svg>
<svg style="left:211px;top:149px;" width="12" height="12" viewBox="0 0 12 12"><path d="M6 1.5 V10.5 M1.5 6 H10.5" stroke="#b8b8b8" stroke-width="1.6"/></svg>
<div class="t" style="left:246.25px;top:149.54px;font-size:9.4px;line-height:9.4px;color:#e6e6e6;">New</div>
<div style="left:179.8px;top:169.25px;width:110px;height:16.5px;background:#282828;border-radius:3px;border:1px solid #404040;"></div>
<div class="t" style="left:186.25px;top:171.79px;font-size:9.4px;line-height:9.4px;color:#e6e6e6;">Linear</div>
<div style="left:179.8px;top:191px;width:110px;height:16.5px;background:#282828;border-radius:3px;border:1px solid #404040;"></div>
<div class="t" style="left:186.25px;top:194.29px;font-size:9.4px;line-height:9.4px;color:#e6e6e6;">Flat</div>
<div style="left:179.8px;top:212.5px;width:110px;height:16.5px;background:#282828;border-radius:3px;border:1px solid #404040;"></div>
<div class="t" style="left:186.25px;top:216.29px;font-size:9.4px;line-height:9.4px;color:#e6e6e6;">Repeat</div>
<svg style="left:165.9px;top:237.4px;" width="9.2" height="9.2" viewBox="0 0 9.2 9.2"><circle cx="4.6" cy="4.6" r="3.6" fill="#6363c7" stroke="#111" stroke-opacity="0.7" stroke-width="0.9"/></svg>
<div class="t" style="left:180.50px;top:238.04px;font-size:9.4px;line-height:9.4px;color:#e6e6e6;">Vector</div>
<div style="left:414px;top:44px;width:211px;height:577.5px;background:#303030;border-radius:5px;box-shadow:0 1px 6px rgba(0,0,0,0.45);border:1.2px solid #f0f0f0;"></div>
<div style="left:415.2px;top:45.2px;width:208.6px;height:17px;background:#2b682b;border-radius:0px;border-radius:4px 4px 0 0;"></div>
<svg style="left:424.2px;top:50.1px;" width="9" height="5.8" viewBox="0 0 9 5.8"><path d="M1 1 L4.5 4.8 L8 1" stroke="#cfcfcf" stroke-width="1.2" fill="none"/></svg>
<div class="t" style="left:437.75px;top:47.64px;font-size:9.4px;line-height:9.4px;color:#e6e6e6;">Principled BSDF</div>
<div class="t" style="left:535.00px;top:70.29px;width:80px;text-align:right;font-size:9.4px;line-height:9.4px;color:#e6e6e6;">BSDF</div>
<svg style="left:619.65px;top:70.65px;" width="9.2" height="9.2" viewBox="0 0 9.2 9.2"><circle cx="4.6" cy="4.6" r="3.6" fill="#63c763" stroke="#111" stroke-opacity="0.7" stroke-width="0.9"/></svg>
<div style="left:423px;top:93.25px;width:192.5px;height:16px;background:#282828;border-radius:3px;border:1px solid #404040;"></div>
<svg style="left:606.5px;top:99.25px;" width="7" height="5" viewBox="0 0 7 5"><path d="M1 1 L3.5 4 L6 1" stroke="#d0d0d0" stroke-width="1.1" fill="none"/></svg>
<div style="left:423px;top:115.5px;width:192.5px;height:16px;background:#282828;border-radius:3px;border:1px solid #404040;"></div>
<svg style="left:606.5px;top:121.5px;" width="7" height="5" viewBox="0 0 7 5"><path d="M1 1 L3.5 4 L6 1" stroke="#d0d0d0" stroke-width="1.1" fill="none"/></svg>
<div class="t" style="left:478.28px;top:117.84px;font-size:9.4px;line-height:9.4px;color:#e6e6e6;">alk</div>
<div style="left:423px;top:156.75px;width:192px;height:15.5px;background:#545454;border-radius:3px;"></div>
<div class="t" style="left:477.50px;top:159.19px;font-size:9.4px;line-height:9.4px;color:#e6e6e6;">ce</div>
<div class="t" style="left:523.65px;top:159.19px;width:80px;text-align:right;font-size:9.4px;line-height:9.4px;color:#e6e6e6;letter-spacing:0.65px;">0.000</div>
<div style="left:423px;top:175.95px;width:192.5px;height:16px;background:#282828;border-radius:3px;border:1px solid #404040;"></div>
<div class="t" style="left:476.27px;top:178.39px;font-size:9.4px;line-height:9.4px;color:#e6e6e6;">e Radius</div>
<svg style="left:606.5px;top:181.95px;" width="7" height="5" viewBox="0 0 7 5"><path d="M1 1 L3.5 4 L6 1" stroke="#d0d0d0" stroke-width="1.1" fill="none"/></svg>
<div class="t" style="left:477.90px;top:197.59px;font-size:9.4px;line-height:9.4px;color:#e6e6e6;">C...</div>
<div style="left:505px;top:195.15px;width:110px;height:14.5px;background:#e6e6e6;border-radius:3px;"></div>
<div style="left:423px;top:214.35px;width:192px;height:15.5px;background:#545454;border-radius:3px;"></div>
<div class="t" style="left:477.87px;top:216.79px;font-size:9.4px;line-height:9.4px;color:#e6e6e6;">ce IOR</div>
<div class="t" style="left:523.65px;top:216.79px;width:80px;text-align:right;font-size:9.4px;line-height:9.4px;color:#e6e6e6;letter-spacing:0.65px;">1.400</div>
<div style="left:423px;top:233.55px;width:192px;height:15.5px;background:#545454;border-radius:3px;"></div>
<div class="t" style="left:477.57px;top:235.99px;font-size:9.4px;line-height:9.4px;color:#e6e6e6;">ce Anisotropy</div>
<div class="t" style="left:523.65px;top:235.99px;width:80px;text-align:right;font-size:9.4px;line-height:9.4px;color:#e6e6e6;letter-spacing:0.65px;">0.000</div>
<div style="left:423px;top:252.75px;width:192px;height:15.5px;background:#545454;border-radius:3px;"></div>
<div class="t" style="left:523.65px;top:255.19px;width:80px;text-align:right;font-size:9.4px;line-height:9.4px;color:#e6e6e6;letter-spacing:0.65px;">0.000</div>
<div style="left:423px;top:271.95px;width:192px;height:15.5px;background:#545454;border-radius:3px;"></div>
<div style="left:423px;top:271.95px;width:95px;height:15.5px;background:#4772b3;border-radius:0px;border-radius:3px 0 0 3px;"></div>
<div class="t" style="left:523.65px;top:274.39px;width:80px;text-align:right;font-size:9.4px;line-height:9.4px;color:#e6e6e6;letter-spacing:0.65px;">0.500</div>
<div style="left:423px;top:291.15px;width:192px;height:15.5px;background:#545454;border-radius:3px;"></div>
<div class="t" style="left:473.37px;top:293.59px;font-size:9.4px;line-height:9.4px;color:#e6e6e6;">r Tint</div>
<div class="t" style="left:523.65px;top:293.59px;width:80px;text-align:right;font-size:9.4px;line-height:9.4px;color:#e6e6e6;letter-spacing:0.65px;">0.000</div>
<div style="left:423px;top:310.35px;width:192px;height:15.5px;background:#545454;border-radius:3px;"></div>
<div style="left:423px;top:310.35px;width:95px;height:15.5px;background:#4772b3;border-radius:0px;border-radius:3px 0 0 3px;"></div>
<div class="t" style="left:476.90px;top:312.79px;font-size:9.4px;line-height:9.4px;color:#e6e6e6;">ss</div>
<div class="t" style="left:523.65px;top:312.79px;width:80px;text-align:right;font-size:9.4px;line-height:9.4px;color:#e6e6e6;letter-spacing:0.65px;">0.500</div>
<div style="left:423px;top:329.54999999999995px;width:192px;height:15.5px;background:#545454;border-radius:3px;"></div>
<div class="t" style="left:478.31px;top:331.99px;font-size:9.4px;line-height:9.4px;color:#e6e6e6;">ic</div>
<div class="t" style="left:523.65px;top:331.99px;width:80px;text-align:right;font-size:9.4px;line-height:9.4px;color:#e6e6e6;letter-spacing:0.65px;">0.000</div>
<div style="left:423px;top:348.75px;width:192px;height:15.5px;background:#545454;border-radius:3px;"></div>
<div class="t" style="left:478.49px;top:351.19px;font-size:9.4px;line-height:9.4px;color:#e6e6e6;">ic Rotation</div>
<div class="t" style="left:523.65px;top:351.19px;width:80px;text-align:right;font-size:9.4px;line-height:9.4px;color:#e6e6e6;letter-spacing:0.65px;">0.000</div>
<div style="left:423px;top:367.95px;width:192px;height:15.5px;background:#545454;border-radius:3px;"></div>
<div class="t" style="left:523.65px;top:370.39px;width:80px;text-align:right;font-size:9.4px;line-height:9.4px;color:#e6e6e6;letter-spacing:0.65px;">0.000</div>
<div style="left:423px;top:387.15px;width:192px;height:15.5px;background:#545454;border-radius:3px;"></div>
<div style="left:423px;top:387.15px;width:95px;height:15.5px;background:#4772b3;border-radius:0px;border-radius:3px 0 0 3px;"></div>
<div class="t" style="left:475.18px;top:389.59px;font-size:9.4px;line-height:9.4px;color:#e6e6e6;">nt</div>
<div class="t" style="left:523.65px;top:389.59px;width:80px;text-align:right;font-size:9.4px;line-height:9.4px;color:#e6e6e6;letter-spacing:0.65px;">0.500</div>
<div style="left:423px;top:406.35px;width:192px;height:15.5px;background:#545454;border-radius:3px;"></div>
<div class="t" style="left:523.65px;top:408.79px;width:80px;text-align:right;font-size:9.4px;line-height:9.4px;color:#e6e6e6;letter-spacing:0.65px;">0.000</div>
<div style="left:423px;top:425.55px;width:192px;height:15.5px;background:#545454;border-radius:3px;"></div>
<div class="t" style="left:473.53px;top:427.99px;font-size:9.4px;line-height:9.4px;color:#e6e6e6;">t Roughness</div>
<div class="t" style="left:523.65px;top:427.99px;width:80px;text-align:right;font-size:9.4px;line-height:9.4px;color:#e6e6e6;letter-spacing:0.65px;">0.030</div>
<div style="left:423px;top:444.75px;width:192px;height:15.5px;background:#545454;border-radius:3px;"></div>
<div class="t" style="left:523.65px;top:447.19px;width:80px;text-align:right;font-size:9.4px;line-height:9.4px;color:#e6e6e6;letter-spacing:0.65px;">1.450</div>
<div style="left:423px;top:463.95px;width:192px;height:15.5px;background:#545454;border-radius:3px;"></div>
<div class="t" style="left:475.05px;top:466.39px;font-size:9.4px;line-height:9.4px;color:#e6e6e6;">sion</div>
<div class="t" style="left:523.65px;top:466.39px;width:80px;text-align:right;font-size:9.4px;line-height:9.4px;color:#e6e6e6;letter-spacing:0.65px;">0.000</div>
<div style="left:423px;top:483.15px;width:192px;height:15.5px;background:#545454;border-radius:3px;"></div>
<div class="t" style="left:478.06px;top:485.59px;font-size:9.4px;line-height:9.4px;color:#e6e6e6;">sion Roughness</div>
<div class="t" style="left:523.65px;top:485.59px;width:80px;text-align:right;font-size:9.4px;line-height:9.4px;color:#e6e6e6;letter-spacing:0.65px;">0.000</div>
<div style="left:505px;top:501.45px;width:110px;height:16.3px;background:#000000;border-radius:3px;border:1px solid #404040;"></div>
<div style="left:423px;top:521.55px;width:192px;height:15.5px;background:#545454;border-radius:3px;"></div>
<div class="t" style="left:472.92px;top:523.99px;font-size:9.4px;line-height:9.4px;color:#e6e6e6;">n Strength</div>
<div class="t" style="left:523.65px;top:523.99px;width:80px;text-align:right;font-size:9.4px;line-height:9.4px;color:#e6e6e6;letter-spacing:0.65px;">1.000</div>
<div style="left:423px;top:540.75px;width:192px;height:15.5px;background:#4772b3;border-radius:3px;"></div>
<div class="t" style="left:523.65px;top:543.19px;width:80px;text-align:right;font-size:9.4px;line-height:9.4px;color:#e6e6e6;letter-spacing:0.65px;">1.000</div>
<svg style="left:410.09999999999997px;top:581.1px;" width="9.2" height="9.2" viewBox="0 0 9.2 9.2"><circle cx="4.6" cy="4.6" r="3.6" fill="#6363c7" stroke="#111" stroke-opacity="0.7" stroke-width="0.9"/></svg>
<div class="t" style="left:424.20px;top:581.04px;font-size:9.4px;line-height:9.4px;color:#e6e6e6;">Clearcoat Normal</div>
<svg style="left:410.09999999999997px;top:601.1px;" width="9.2" height="9.2" viewBox="0 0 9.2 9.2"><circle cx="4.6" cy="4.6" r="3.6" fill="#6363c7" stroke="#111" stroke-opacity="0.7" stroke-width="0.9"/></svg>
<div class="t" style="left:424.20px;top:601.04px;font-size:9.4px;line-height:9.4px;color:#e6e6e6;">Tangent</div>
<div style="left:272.5px;top:94.3px;width:204.8px;height:476.2px;background:#181818;border-radius:5px;box-shadow:0 1px 4px rgba(0,0,0,0.35);"></div>
<div class="t" style="left:281.60px;top:104.36px;font-size:10.8px;line-height:10.8px;color:#9a9a9a;">Node Wrangler</div>
<div style="left:272.5px;top:124.0px;width:204.8px;height:1px;background:#2c2c2c;border-radius:0px;"></div>
<div style="left:272.5px;top:153.0px;width:204.8px;height:1px;background:#2c2c2c;border-radius:0px;"></div>
<div style="left:272.5px;top:181.5px;width:204.8px;height:1px;background:#2c2c2c;border-radius:0px;"></div>
<div style="left:272.5px;top:230.5px;width:204.8px;height:1px;background:#2c2c2c;border-radius:0px;"></div>
<div style="left:272.5px;top:300.0px;width:204.8px;height:1px;background:#2c2c2c;border-radius:0px;"></div>
<div style="left:272.5px;top:348.75px;width:204.8px;height:1px;background:#2c2c2c;border-radius:0px;"></div>
<div style="left:272.5px;top:417.75px;width:204.8px;height:1px;background:#2c2c2c;border-radius:0px;"></div>
<div style="left:272.5px;top:447.0px;width:204.8px;height:1px;background:#2c2c2c;border-radius:0px;"></div>
<div style="left:272.5px;top:475.75px;width:204.8px;height:1px;background:#2c2c2c;border-radius:0px;"></div>
<div style="left:272.5px;top:504.75px;width:204.8px;height:1px;background:#2c2c2c;border-radius:0px;"></div>
<div style="left:272.5px;top:534.0px;width:204.8px;height:1px;background:#2c2c2c;border-radius:0px;"></div>
<div style="left:272.5px;top:562.75px;width:204.8px;height:1px;background:#2c2c2c;border-radius:0px;"></div>
<div class="t" style="left:305.50px;top:133.11px;font-size:10.8px;line-height:10.8px;color:#e6e6e6;">Merge Selected Nodes</div>
<div style="left:307.5px;top:145.05px;width:5px;height:1px;background:#d0d0d0;border-radius:0px;"></div>
<svg style="left:464px;top:134.25px;" width="8" height="8" viewBox="0 0 8 8"><path d="M0.5 0.8 L6.5 4 L0.5 7.2 Z" fill="#8a8a8a"/></svg>
<div class="t" style="left:305.50px;top:162.36px;font-size:10.8px;line-height:10.8px;color:#e6e6e6;">Switch Node Type</div>
<div style="left:306.6px;top:174.3px;width:5px;height:1px;background:#d0d0d0;border-radius:0px;"></div>
<div class="t" style="left:343.25px;top:162.36px;width:120px;text-align:right;font-size:10.8px;line-height:10.8px;color:#7c7c7c;">Shift S</div>
<svg style="left:464px;top:163.5px;" width="8" height="8" viewBox="0 0 8 8"><path d="M0.5 0.8 L6.5 4 L0.5 7.2 Z" fill="#8a8a8a"/></svg>
<div class="t" style="left:305.50px;top:190.86px;font-size:10.8px;line-height:10.8px;color:#e6e6e6;">Add Texture Setup</div>
<div style="left:306.6px;top:202.8px;width:5px;height:1px;background:#d0d0d0;border-radius:0px;"></div>
<div class="t" style="left:343.25px;top:190.86px;width:120px;text-align:right;font-size:10.8px;line-height:10.8px;color:#7c7c7c;">Ctrl T</div>
<svg style="left:282.00px;top:185.00px;overflow:visible" width="18.00" height="18.00" viewBox="0 0 18 18"><rect x="2" y="4" width="11.1" height="13.9" rx="1.6" fill="#dedede"/><rect x="3.2" y="5.2" width="8.7" height="2.7" fill="#181818" opacity="0.9"/><circle cx="13.4" cy="12.65" r="3.7" fill="#181818"/><circle cx="13.4" cy="12.65" r="2.8" fill="#8f8f8f"/></svg>
<div class="t" style="left:305.50px;top:209.86px;font-size:10.8px;line-height:10.8px;color:#e6e6e6;">Add Principled Setup</div>
<div style="left:328.8px;top:221.8px;width:5px;height:1px;background:#d0d0d0;border-radius:0px;"></div>
<div class="t" style="left:343.25px;top:209.86px;width:120px;text-align:right;font-size:10.8px;line-height:10.8px;color:#7c7c7c;">Shift Ctrl T</div>
<svg style="left:282.00px;top:204.00px;overflow:visible" width="18.00" height="18.00" viewBox="0 0 18 18"><rect x="2" y="4" width="11.1" height="13.9" rx="1.6" fill="#dedede"/><rect x="3.2" y="5.2" width="8.7" height="2.7" fill="#181818" opacity="0.9"/><circle cx="13.4" cy="12.65" r="3.7" fill="#181818"/><circle cx="13.4" cy="12.65" r="2.8" fill="#8f8f8f"/></svg>
<div class="t" style="left:305.50px;top:239.86px;font-size:10.8px;line-height:10.8px;color:#e6e6e6;">Detach Outputs</div>
<div style="left:306.9px;top:251.8px;width:5px;height:1px;background:#d0d0d0;border-radius:0px;"></div>
<div class="t" style="left:343.25px;top:239.86px;width:120px;text-align:right;font-size:10.8px;line-height:10.8px;color:#7c7c7c;">Shift Alt D</div>
<svg style="left:282.00px;top:236.00px;overflow:visible" width="18.00" height="18.00" viewBox="0 0 18 18"><g stroke="#a0a0a0" stroke-width="1.05" fill="none" stroke-linecap="round"><path d="M9.4 5.4 A3.1 3.1 0 1 1 12.5 8.5"/><path d="M5.6 9.2 A3.3 3.3 0 1 0 8.9 12.5"/><path d="M6.4 2 V4.8 M3.3 3.1 L4.7 4.4 M2.2 6.4 H4.9 M13.3 11.4 H15.8 M13.4 13.2 L14.6 14.4 M11.4 13.2 V15.6"/></g></svg>
<div class="t" style="left:305.50px;top:259.11px;font-size:10.8px;line-height:10.8px;color:#e6e6e6;">Swap Links</div>
<div style="left:336.0px;top:271.05px;width:5px;height:1px;background:#d0d0d0;border-radius:0px;"></div>
<div class="t" style="left:343.25px;top:259.11px;width:120px;text-align:right;font-size:10.8px;line-height:10.8px;color:#7c7c7c;">Alt S</div>
<div class="t" style="left:305.50px;top:280.11px;font-size:10.8px;line-height:10.8px;color:#e6e6e6;letter-spacing:-0.27px;">Add Reroutes</div>
<div style="left:328.0px;top:292.05px;width:5px;height:1px;background:#d0d0d0;border-radius:0px;"></div>
<div class="t" style="left:343.25px;top:280.11px;width:120px;text-align:right;font-size:10.8px;line-height:10.8px;color:#7c7c7c;">Numpad /</div>
<svg style="left:464px;top:281.25px;" width="8" height="8" viewBox="0 0 8 8"><path d="M0.5 0.8 L6.5 4 L0.5 7.2 Z" fill="#8a8a8a"/></svg>
<svg style="left:285.9px;top:279.85px;" width="10" height="10" viewBox="0 0 10 10"><circle cx="5" cy="5" r="2.8" fill="none" stroke="#d8d8d8" stroke-width="1.2"/></svg>
<div class="t" style="left:305.50px;top:309.11px;font-size:10.8px;line-height:10.8px;color:#e6e6e6;letter-spacing:0.16px;">Link Active To Selected</div>
<div style="left:362.9px;top:321.05px;width:5px;height:1px;background:#d0d0d0;border-radius:0px;"></div>
<div class="t" style="left:343.25px;top:309.11px;width:120px;text-align:right;font-size:10.8px;line-height:10.8px;color:#7c7c7c;">\</div>
<svg style="left:464px;top:310.25px;" width="8" height="8" viewBox="0 0 8 8"><path d="M0.5 0.8 L6.5 4 L0.5 7.2 Z" fill="#8a8a8a"/></svg>
<svg style="left:282.00px;top:304.00px;overflow:visible" width="18.00" height="18.00" viewBox="0 0 18 18"><g stroke="#dcdcdc" stroke-width="1.1" fill="none" stroke-linecap="round"><path d="M7.92 6.79 L10.47 4.24 A3 3 0 0 1 14.71 8.48 L12.16 11.03"/><path d="M10.08 11.21 L7.53 13.76 A3 3 0 0 1 3.29 9.52 L5.84 6.97"/><path d="M6.6 12.1 L11.4 7.3"/></g></svg>
<div class="t" style="left:305.50px;top:327.86px;font-size:10.8px;line-height:10.8px;color:#e6e6e6;letter-spacing:0.18px;">Connect to Output</div>
<div style="left:306.9px;top:339.8px;width:5px;height:1px;background:#d0d0d0;border-radius:0px;"></div>
<div class="t" style="left:343.25px;top:327.86px;width:120px;text-align:right;font-size:10.8px;line-height:10.8px;color:#7c7c7c;">O</div>
<svg style="left:282.00px;top:323.00px;overflow:visible" width="18.00" height="18.00" viewBox="0 0 18 18"><path d="M2 7.8 L4.5 2.8 L7 7.8 Z" fill="#dcdcdc"/><path d="M8.2 5.4 H10.8 Q12.2 5.6 11.4 6.8 L7.4 11.6 Q6.4 13.2 8 13.3 H11.4" stroke="#dcdcdc" stroke-width="1.05" fill="none"/><rect x="11.9" y="12" width="4" height="4.7" fill="#dcdcdc"/></svg>
<div class="t" style="left:305.50px;top:357.86px;font-size:10.8px;line-height:10.8px;color:#e6e6e6;">Clear Label</div>
<div style="left:316.2px;top:369.8px;width:5px;height:1px;background:#d0d0d0;border-radius:0px;"></div>
<div class="t" style="left:305.50px;top:377.11px;font-size:10.8px;line-height:10.8px;color:#e6e6e6;">Modify Labels</div>
<div style="left:315.0px;top:389.05px;width:5px;height:1px;background:#d0d0d0;border-radius:0px;"></div>
<div class="t" style="left:343.25px;top:377.11px;width:120px;text-align:right;font-size:10.8px;line-height:10.8px;color:#7c7c7c;">Shift Alt L</div>
<div class="t" style="left:305.50px;top:397.86px;font-size:10.8px;line-height:10.8px;color:#e6e6e6;">Batch Change</div>
<div style="left:306.6px;top:409.8px;width:5px;height:1px;background:#d0d0d0;border-radius:0px;"></div>
<svg style="left:464px;top:399px;" width="8" height="8" viewBox="0 0 8 8"><path d="M0.5 0.8 L6.5 4 L0.5 7.2 Z" fill="#8a8a8a"/></svg>
<div class="t" style="left:305.50px;top:427.11px;font-size:10.8px;line-height:10.8px;color:#e6e6e6;letter-spacing:0.1px;">Copy to Selected</div>
<div style="left:325.8px;top:441.25px;width:5px;height:1px;background:#d0d0d0;border-radius:0px;"></div>
<div class="t" style="left:343.25px;top:427.11px;width:120px;text-align:right;font-size:10.8px;line-height:10.8px;color:#7c7c7c;">Shift C</div>
<svg style="left:464px;top:428.25px;" width="8" height="8" viewBox="0 0 8 8"><path d="M0.5 0.8 L6.5 4 L0.5 7.2 Z" fill="#8a8a8a"/></svg>
<div class="t" style="left:305.50px;top:456.11px;font-size:10.8px;line-height:10.8px;color:#e6e6e6;">Reload Images</div>
<div style="left:341.7px;top:468.05px;width:5px;height:1px;background:#d0d0d0;border-radius:0px;"></div>
<div class="t" style="left:343.25px;top:456.11px;width:120px;text-align:right;font-size:10.8px;line-height:10.8px;color:#7c7c7c;">Alt R</div>
<svg style="left:282.00px;top:452.00px;overflow:visible" width="18.00" height="18.00" viewBox="0 0 18 18"><g stroke="#dcdcdc" stroke-width="1.2" fill="none" stroke-linecap="butt"><path d="M2.5 7.6 A6.6 6.6 0 0 1 14.2 5.4"/><path d="M15.7 2.3 V7.7 H10.6"/><path d="M15.5 10.4 A6.6 6.6 0 0 1 3.8 12.6"/><path d="M2.3 15.7 V10.3 H7.4"/></g></svg>
<div class="t" style="left:305.50px;top:484.86px;font-size:10.8px;line-height:10.8px;color:#e6e6e6;">Frame Selected</div>
<div style="left:306.3px;top:496.8px;width:5px;height:1px;background:#d0d0d0;border-radius:0px;"></div>
<div class="t" style="left:343.25px;top:484.86px;width:120px;text-align:right;font-size:10.8px;line-height:10.8px;color:#7c7c7c;">Shift P</div>
<svg style="left:282.00px;top:481.00px;overflow:visible" width="18.00" height="18.00" viewBox="0 0 18 18"><rect x="2.4" y="2.4" width="13.2" height="12.9" fill="none" stroke="#cfcfcf" stroke-width="1" stroke-dasharray="1.5 1.3"/><g fill="#181818" stroke="#e6e6e6" stroke-width="1.1"><rect x="7.1" y="5.2" width="3.4" height="3.4"/><rect x="5.2" y="8.3" width="3.4" height="3.4"/><rect x="9.4" y="9.4" width="3.4" height="3.4"/></g></svg>
<div class="t" style="left:305.50px;top:514.11px;font-size:10.8px;line-height:10.8px;color:#e6e6e6;">Align Nodes</div>
<div style="left:333.9px;top:526.05px;width:5px;height:1px;background:#d0d0d0;border-radius:0px;"></div>
<div class="t" style="left:343.25px;top:514.11px;width:120px;text-align:right;font-size:10.8px;line-height:10.8px;color:#7c7c7c;">Shift =</div>
<svg style="left:282.00px;top:508.00px;overflow:visible" width="18.00" height="18.00" viewBox="0 0 18 18"><g fill="#dcdcdc"><circle cx="3.4" cy="6.6" r="1.45"/><circle cx="8.4" cy="6.6" r="1.45"/><circle cx="13.4" cy="6.6" r="1.45"/></g><g stroke="#dcdcdc" stroke-width="1.2" fill="none" stroke-linecap="round"><path d="M2.2 14.3 H15.8 M5.4 11.0 L2.2 14.3 L5.4 17.6 M12.6 11.0 L15.8 14.3 L12.6 17.6"/></g></svg>
<div class="t" style="left:305.50px;top:542.86px;font-size:10.8px;line-height:10.8px;color:#e6e6e6;">Delete Unused Nodes</div>
<div style="left:341.1px;top:554.8px;width:5px;height:1px;background:#d0d0d0;border-radius:0px;"></div>
<div class="t" style="left:343.25px;top:542.86px;width:120px;text-align:right;font-size:10.8px;line-height:10.8px;color:#7c7c7c;">Alt X</div>
<svg style="left:282.00px;top:538.00px;overflow:visible" width="18.00" height="18.00" viewBox="0 0 18 18"><circle cx="9" cy="10.1" r="7.3" fill="#dcdcdc"/><path d="M5.9 7.0 L12.1 13.2 M12.1 7.0 L5.9 13.2" stroke="#181818" stroke-width="1.9" stroke-linecap="round"/></svg>
<div style="left:702px;top:0px;width:224px;height:648px;background:#303030;border-radius:0px;"></div>
<div style="left:696px;top:270px;width:3px;height:366px;background:#363636;border-radius:1.5px;"></div>
<div style="left:711px;top:3.75px;width:214px;height:532.25px;background:#3d3d3d;border-radius:5px;"></div>
<svg style="left:718.4000000000001px;top:13.5px;" width="11.6" height="7" viewBox="0 0 11.6 7"><path d="M1 1 L5.8 6 L10.6 1" stroke="#d0d0d0" stroke-width="1.0" fill="none"/></svg>
<div class="t" style="left:734.50px;top:11.84px;font-size:12px;line-height:12px;color:#e6e6e6;letter-spacing:0.12px;">Node Wrangler</div>
<svg style="left:906px;top:14px;shape-rendering:crispEdges;" width="14" height="8" viewBox="0 0 14 8"><rect x="1" y="1" width="1" height="1" fill="#b0b0b0"/><rect x="1" y="2" width="1" height="1" fill="#000"/><rect x="1" y="4" width="1" height="1" fill="#b0b0b0"/><rect x="1" y="5" width="1" height="1" fill="#000"/><rect x="4" y="1" width="1" height="1" fill="#b0b0b0"/><rect x="4" y="2" width="1" height="1" fill="#000"/><rect x="4" y="4" width="1" height="1" fill="#b0b0b0"/><rect x="4" y="5" width="1" height="1" fill="#000"/><rect x="7" y="1" width="1" height="1" fill="#b0b0b0"/><rect x="7" y="2" width="1" height="1" fill="#000"/><rect x="7" y="4" width="1" height="1" fill="#b0b0b0"/><rect x="7" y="5" width="1" height="1" fill="#000"/><rect x="10" y="1" width="1" height="1" fill="#b0b0b0"/><rect x="10" y="2" width="1" height="1" fill="#000"/><rect x="10" y="4" width="1" height="1" fill="#b0b0b0"/><rect x="10" y="5" width="1" height="1" fill="#000"/></svg>
<div class="t" style="left:720.50px;top:42.84px;font-size:12px;line-height:12px;color:#dadada;letter-spacing:0.12px;">(Quick access: Shift+W)</div>
<div style="left:720px;top:66.25px;width:195px;height:19.5px;background:#282828;border-radius:4px;box-shadow:0 1px 0 rgba(0,0,0,0.12);"></div>
<div class="t" style="left:728.25px;top:70.59px;font-size:12px;line-height:12px;color:#e6e6e6;letter-spacing:0.12px;">Merge Selected Nodes</div>
<svg style="left:904.0px;top:74.0px;" width="9" height="6" viewBox="0 0 9 6"><path d="M1 1 L4.5 5 L8 1" stroke="#d8d8d8" stroke-width="1.2" fill="none"/></svg>
<div style="left:720px;top:100px;width:195px;height:18.75px;background:#282828;border-radius:4px;box-shadow:0 1px 0 rgba(0,0,0,0.12);"></div>
<div class="t" style="left:728.25px;top:103.84px;font-size:12px;line-height:12px;color:#e6e6e6;letter-spacing:0.12px;">Switch Node Type</div>
<svg style="left:904.0px;top:107.375px;" width="9" height="6" viewBox="0 0 9 6"><path d="M1 1 L4.5 5 L8 1" stroke="#d8d8d8" stroke-width="1.2" fill="none"/></svg>
<div style="left:720px;top:133px;width:195px;height:19.5px;background:#545454;border-radius:4px 4px 0 0;box-shadow:0 1px 0 rgba(0,0,0,0.12);"></div>
<div class="t" style="left:732.00px;top:135.84px;width:190px;text-align:center;font-size:12px;line-height:12px;color:#e6e6e6;letter-spacing:0.12px;">Add Texture Setup</div>
<div style="left:720px;top:152.5px;width:195px;height:0.8px;background:#474747;border-radius:0px;"></div>
<div style="left:720px;top:153px;width:195px;height:21.25px;background:#545454;border-radius:0 0 4px 4px;box-shadow:0 1px 0 rgba(0,0,0,0.12);"></div>
<div class="t" style="left:732.00px;top:156.59px;width:190px;text-align:center;font-size:12px;line-height:12px;color:#e6e6e6;letter-spacing:0.12px;">Add Principled Setup</div>
<svg style="left:721.80px;top:130.70px;overflow:visible" width="19.44" height="19.44" viewBox="0 0 18 18"><rect x="2" y="4" width="11.1" height="13.9" rx="1.6" fill="#dedede"/><rect x="3.2" y="5.2" width="8.7" height="2.7" fill="#545454" opacity="0.9"/><circle cx="13.4" cy="12.65" r="3.7" fill="#545454"/><circle cx="13.4" cy="12.65" r="2.8" fill="#8f8f8f"/></svg>
<svg style="left:721.80px;top:151.70px;overflow:visible" width="19.44" height="19.44" viewBox="0 0 18 18"><rect x="2" y="4" width="11.1" height="13.9" rx="1.6" fill="#dedede"/><rect x="3.2" y="5.2" width="8.7" height="2.7" fill="#545454" opacity="0.9"/><circle cx="13.4" cy="12.65" r="3.7" fill="#545454"/><circle cx="13.4" cy="12.65" r="2.8" fill="#8f8f8f"/></svg>
<div style="left:720px;top:187.25px;width:195px;height:20.25px;background:#545454;border-radius:4px 4px 0 0;box-shadow:0 1px 0 rgba(0,0,0,0.12);"></div>
<div class="t" style="left:732.00px;top:190.84px;width:190px;text-align:center;font-size:12px;line-height:12px;color:#e6e6e6;letter-spacing:0.12px;">Detach Outputs</div>
<svg style="left:722.40px;top:188.40px;overflow:visible" width="19.08" height="19.08" viewBox="0 0 18 18"><g stroke="#a0a0a0" stroke-width="1.05" fill="none" stroke-linecap="round"><path d="M9.4 5.4 A3.1 3.1 0 1 1 12.5 8.5"/><path d="M5.6 9.2 A3.3 3.3 0 1 0 8.9 12.5"/><path d="M6.4 2 V4.8 M3.3 3.1 L4.7 4.4 M2.2 6.4 H4.9 M13.3 11.4 H15.8 M13.4 13.2 L14.6 14.4 M11.4 13.2 V15.6"/></g></svg>
<div style="left:720px;top:208px;width:195px;height:20.5px;background:#545454;border-radius:0;box-shadow:0 1px 0 rgba(0,0,0,0.12);"></div>
<div class="t" style="left:722.50px;top:211.59px;width:190px;text-align:center;font-size:12px;line-height:12px;color:#e6e6e6;letter-spacing:0.12px;">Swap Links</div>
<div style="left:720px;top:207.5px;width:195px;height:0.8px;background:#474747;border-radius:0px;"></div>
<div style="left:720px;top:229px;width:195px;height:20.25px;background:#282828;border-radius:0 0 4px 4px;"></div>
<svg style="left:727px;top:235px;" width="10" height="10" viewBox="0 0 10 10"><circle cx="5" cy="5" r="2.9" fill="none" stroke="#dcdcdc" stroke-width="1.2"/></svg>
<div class="t" style="left:747.00px;top:233.34px;font-size:12px;line-height:12px;color:#e6e6e6;letter-spacing:0.12px;">Add Reroutes</div>
<svg style="left:904.0px;top:237.0px;" width="9" height="6" viewBox="0 0 9 6"><path d="M1 1 L4.5 5 L8 1" stroke="#d8d8d8" stroke-width="1.2" fill="none"/></svg>
<div style="left:720px;top:264.25px;width:195px;height:19.5px;background:#282828;border-radius:4px 4px 0 0;"></div>
<svg style="left:722.10px;top:262.80px;overflow:visible" width="19.08" height="19.08" viewBox="0 0 18 18"><g stroke="#dcdcdc" stroke-width="1.1" fill="none" stroke-linecap="round"><path d="M7.92 6.79 L10.47 4.24 A3 3 0 0 1 14.71 8.48 L12.16 11.03"/><path d="M10.08 11.21 L7.53 13.76 A3 3 0 0 1 3.29 9.52 L5.84 6.97"/><path d="M6.6 12.1 L11.4 7.3"/></g></svg>
<div class="t" style="left:747.00px;top:267.09px;font-size:12px;line-height:12px;color:#e6e6e6;letter-spacing:0.12px;">Link Active To Selected</div>
<svg style="left:904.0px;top:271.5px;" width="9" height="6" viewBox="0 0 9 6"><path d="M1 1 L4.5 5 L8 1" stroke="#d8d8d8" stroke-width="1.2" fill="none"/></svg>
<div style="left:720px;top:283.75px;width:195px;height:20.5px;background:#545454;border-radius:0 0 4px 4px;box-shadow:0 1px 0 rgba(0,0,0,0.12);"></div>
<div class="t" style="left:732.00px;top:287.84px;width:190px;text-align:center;font-size:12px;line-height:12px;color:#e6e6e6;letter-spacing:0.12px;">Connect to Output</div>
<svg style="left:722.10px;top:284.30px;overflow:visible" width="19.08" height="19.08" viewBox="0 0 18 18"><path d="M2 7.8 L4.5 2.8 L7 7.8 Z" fill="#dcdcdc"/><path d="M8.2 5.4 H10.8 Q12.2 5.6 11.4 6.8 L7.4 11.6 Q6.4 13.2 8 13.3 H11.4" stroke="#dcdcdc" stroke-width="1.05" fill="none"/><rect x="11.9" y="12" width="4" height="4.7" fill="#dcdcdc"/></svg>
<div style="left:720px;top:318px;width:195px;height:20.5px;background:#545454;border-radius:4px 4px 0 0;"></div>
<div style="left:817px;top:318px;width:1px;height:20.5px;background:#474747;border-radius:0px;"></div>
<div class="t" style="left:718.00px;top:321.59px;width:100px;text-align:center;font-size:12px;line-height:12px;color:#e6e6e6;letter-spacing:0.12px;">Clear Label</div>
<div class="t" style="left:816.50px;top:321.59px;width:100px;text-align:center;font-size:12px;line-height:12px;color:#e6e6e6;letter-spacing:0.12px;">Modify Labels</div>
<div style="left:720px;top:338.5px;width:195px;height:19.75px;background:#282828;border-radius:0 0 4px 4px;"></div>
<div class="t" style="left:728.25px;top:343.09px;font-size:12px;line-height:12px;color:#e6e6e6;letter-spacing:0.12px;">Batch Change</div>
<svg style="left:904.0px;top:346.5px;" width="9" height="6" viewBox="0 0 9 6"><path d="M1 1 L4.5 5 L8 1" stroke="#d8d8d8" stroke-width="1.2" fill="none"/></svg>
<div style="left:720px;top:368px;width:195px;height:18.75px;background:#282828;border-radius:4px;box-shadow:0 1px 0 rgba(0,0,0,0.12);"></div>
<div class="t" style="left:728.25px;top:371.09px;font-size:12px;line-height:12px;color:#e6e6e6;letter-spacing:0.12px;">Copy to Selected</div>
<svg style="left:904.0px;top:375.375px;" width="9" height="6" viewBox="0 0 9 6"><path d="M1 1 L4.5 5 L8 1" stroke="#d8d8d8" stroke-width="1.2" fill="none"/></svg>
<div style="left:720px;top:401.25px;width:195px;height:19.25px;background:#545454;border-radius:4px;box-shadow:0 1px 0 rgba(0,0,0,0.12);"></div>
<div class="t" style="left:732.00px;top:403.59px;width:190px;text-align:center;font-size:12px;line-height:12px;color:#e6e6e6;letter-spacing:0.12px;">Reload Images</div>
<svg style="left:722.00px;top:400.90px;overflow:visible" width="19.08" height="19.08" viewBox="0 0 18 18"><g stroke="#dcdcdc" stroke-width="1.2" fill="none" stroke-linecap="butt"><path d="M2.5 7.6 A6.6 6.6 0 0 1 14.2 5.4"/><path d="M15.7 2.3 V7.7 H10.6"/><path d="M15.5 10.4 A6.6 6.6 0 0 1 3.8 12.6"/><path d="M2.3 15.7 V10.3 H7.4"/></g></svg>
<div style="left:720px;top:433.75px;width:195px;height:19.5px;background:#545454;border-radius:4px;box-shadow:0 1px 0 rgba(0,0,0,0.12);"></div>
<div class="t" style="left:732.00px;top:436.84px;width:190px;text-align:center;font-size:12px;line-height:12px;color:#e6e6e6;letter-spacing:0.12px;">Frame Selected</div>
<svg style="left:722.00px;top:433.70px;overflow:visible" width="19.08" height="19.08" viewBox="0 0 18 18"><rect x="2.4" y="2.4" width="13.2" height="12.9" fill="none" stroke="#cfcfcf" stroke-width="1" stroke-dasharray="1.5 1.3"/><g fill="#545454" stroke="#e6e6e6" stroke-width="1.1"><rect x="7.1" y="5.2" width="3.4" height="3.4"/><rect x="5.2" y="8.3" width="3.4" height="3.4"/><rect x="9.4" y="9.4" width="3.4" height="3.4"/></g></svg>
<div style="left:720px;top:467px;width:195px;height:20px;background:#545454;border-radius:4px;box-shadow:0 1px 0 rgba(0,0,0,0.12);"></div>
<div class="t" style="left:732.00px;top:470.34px;width:190px;text-align:center;font-size:12px;line-height:12px;color:#e6e6e6;letter-spacing:0.12px;">Align Nodes</div>
<svg style="left:722.00px;top:464.90px;overflow:visible" width="19.08" height="19.08" viewBox="0 0 18 18"><g fill="#dcdcdc"><circle cx="3.4" cy="6.6" r="1.45"/><circle cx="8.4" cy="6.6" r="1.45"/><circle cx="13.4" cy="6.6" r="1.45"/></g><g stroke="#dcdcdc" stroke-width="1.2" fill="none" stroke-linecap="round"><path d="M2.2 14.3 H15.8 M5.4 11.0 L2.2 14.3 L5.4 17.6 M12.6 11.0 L15.8 14.3 L12.6 17.6"/></g></svg>
<div style="left:720px;top:500px;width:195px;height:20.5px;background:#545454;border-radius:4px;box-shadow:0 1px 0 rgba(0,0,0,0.12);"></div>
<div class="t" style="left:732.00px;top:503.59px;width:190px;text-align:center;font-size:12px;line-height:12px;color:#e6e6e6;letter-spacing:0.12px;">Delete Unused Nodes</div>
<svg style="left:722.00px;top:499.00px;overflow:visible" width="19.08" height="19.08" viewBox="0 0 18 18"><circle cx="9" cy="10.1" r="7.3" fill="#dcdcdc"/><path d="M5.9 7.0 L12.1 13.2 M12.1 7.0 L5.9 13.2" stroke="#545454" stroke-width="1.9" stroke-linecap="round"/></svg>
</div></body></html>
